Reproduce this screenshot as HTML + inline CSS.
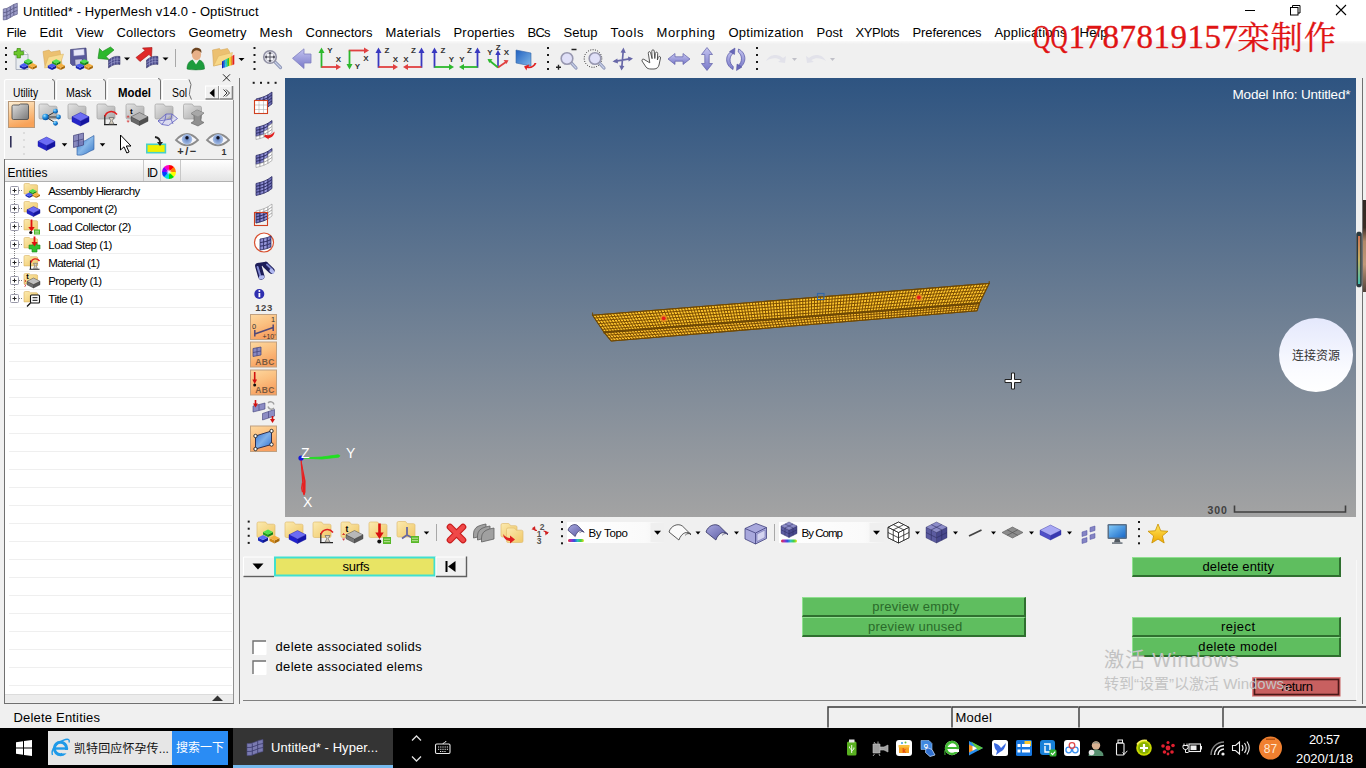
<!DOCTYPE html>
<html><head><meta charset="utf-8"><title>Untitled* - HyperMesh v14.0 - OptiStruct</title>
<style>
*{box-sizing:border-box;margin:0;padding:0}
html,body{width:1366px;height:768px;overflow:hidden;background:#f0f0f0;font-family:"Liberation Sans","Noto Sans CJK SC",sans-serif;font-size:12px;color:#000}
.a{position:absolute}
#title{left:0;top:0;width:1366px;height:22px;background:#fff}
#menu{left:0;top:22px;width:1366px;height:19px;background:#fff}
#tb{left:0;top:41px;width:1366px;height:37px;background:linear-gradient(#fafafa 0,#f0f0f0 3px)}
#left{left:0;top:78px;width:237px;height:627px;background:#f0f0f0}
#vp{left:285px;top:78px;width:1071px;height:439px;background:linear-gradient(#2e5481,#a3a3a3)}
#status{left:0;top:705px;width:1366px;height:23px}
#task{left:0;top:728px;width:1366px;height:40px;background:#000}
.gb{position:absolute;background:#5fbe5f;border-top:1px solid #8fe08f;border-left:1px solid #8fe08f;border-right:2px solid #2f6f2f;border-bottom:2px solid #2f6f2f;text-align:center;font-size:14px;line-height:16px;height:20px}
span.a{white-space:nowrap}
</style></head><body>
<div id="title" class="a"></div><span class="a" style="left:23px;top:3.5px;font-size:13px;letter-spacing:0.092px;color:#000;">Untitled* - HyperMesh v14.0 - OptiStruct</span>
<div id="menu" class="a"></div><span class="a" style="left:6.5px;top:24.5px;font-size:13px;letter-spacing:-0.316px;color:#000;">File</span><span class="a" style="left:39.5px;top:24.5px;font-size:13px;letter-spacing:0.200px;color:#000;">Edit</span><span class="a" style="left:75.5px;top:24.5px;font-size:13px;letter-spacing:0.019px;color:#000;">View</span><span class="a" style="left:116.5px;top:24.5px;font-size:13px;letter-spacing:0.134px;color:#000;">Collectors</span><span class="a" style="left:188.5px;top:24.5px;font-size:13px;letter-spacing:0.133px;color:#000;">Geometry</span><span class="a" style="left:259.5px;top:24.5px;font-size:13px;letter-spacing:0.404px;color:#000;">Mesh</span><span class="a" style="left:305.5px;top:24.5px;font-size:13px;letter-spacing:0.058px;color:#000;">Connectors</span><span class="a" style="left:385.5px;top:24.5px;font-size:13px;letter-spacing:0.283px;color:#000;">Materials</span><span class="a" style="left:453.5px;top:24.5px;font-size:13px;letter-spacing:0.194px;color:#000;">Properties</span><span class="a" style="left:527.5px;top:24.5px;font-size:13px;letter-spacing:-0.780px;color:#000;">BCs</span><span class="a" style="left:563.5px;top:24.5px;font-size:13px;letter-spacing:0.007px;color:#000;">Setup</span><span class="a" style="left:610.5px;top:24.5px;font-size:13px;letter-spacing:0.663px;color:#000;">Tools</span><span class="a" style="left:656.5px;top:24.5px;font-size:13px;letter-spacing:0.615px;color:#000;">Morphing</span><span class="a" style="left:728.5px;top:24.5px;font-size:13px;letter-spacing:0.250px;color:#000;">Optimization</span><span class="a" style="left:816.5px;top:24.5px;font-size:13px;letter-spacing:-0.004px;color:#000;">Post</span><span class="a" style="left:855.5px;top:24.5px;font-size:13px;letter-spacing:-0.374px;color:#000;">XYPlots</span><span class="a" style="left:912.5px;top:24.5px;font-size:13px;letter-spacing:-0.109px;color:#000;">Preferences</span><span class="a" style="left:994.5px;top:24.5px;font-size:13px;letter-spacing:0.173px;color:#000;">Applications</span><span class="a" style="left:1079.5px;top:24.5px;font-size:13px;letter-spacing:0.421px;color:#000;">Help</span>
<div id="tb" class="a"></div>
<svg class="a" style="left:0;top:0" width="1366" height="768" viewBox="0 0 1366 768"><defs>
<linearGradient id="parrow" x1="0" y1="0" x2="0" y2="1"><stop offset="0" stop-color="#c4c4f0"/><stop offset="1" stop-color="#7878c8"/></linearGradient>
<linearGradient id="bplane" x1="0" y1="0" x2="1" y2="1"><stop offset="0" stop-color="#2060c0"/><stop offset="1" stop-color="#80b8e8"/></linearGradient>
<linearGradient id="gfold" x1="0" y1="0" x2="1" y2="1"><stop offset="0" stop-color="#e4e4e4"/><stop offset="1" stop-color="#a8a8a8"/></linearGradient>
<linearGradient id="yfold" x1="0" y1="0" x2="1" y2="1"><stop offset="0" stop-color="#fbeab0"/><stop offset="1" stop-color="#f0c868"/></linearGradient>
<linearGradient id="selbtn" x1="0" y1="0" x2="0.3" y2="1"><stop offset="0" stop-color="#fdf0d8"/><stop offset="0.5" stop-color="#fbc890"/><stop offset="1" stop-color="#f8a258"/></linearGradient>
<linearGradient id="dfold" x1="0" y1="0" x2="1" y2="1"><stop offset="0" stop-color="#e0e0e0"/><stop offset="1" stop-color="#787878"/></linearGradient>
<radialGradient id="bsph" cx="0.35" cy="0.3" r="0.7"><stop offset="0" stop-color="#a0e0ff"/><stop offset="0.5" stop-color="#2090e0"/><stop offset="1" stop-color="#0850a0"/></radialGradient>
<linearGradient id="bsurf" x1="0" y1="0" x2="1" y2="1"><stop offset="0" stop-color="#3070c8"/><stop offset="0.5" stop-color="#88b8e8"/><stop offset="1" stop-color="#3878c8"/></linearGradient>
<radialGradient id="iris" cx="0.5" cy="0.5" r="0.5"><stop offset="0" stop-color="#6080c0"/><stop offset="1" stop-color="#a8c0e8"/></radialGradient>
<linearGradient id="hdr" x1="0" y1="0" x2="0" y2="1"><stop offset="0" stop-color="#ffffff"/><stop offset="1" stop-color="#e4e4e4"/></linearGradient>
<radialGradient id="wheelc"><stop offset="0" stop-color="#fff"/><stop offset="1" stop-color="#fff" stop-opacity="0"/></radialGradient>
<linearGradient id="obtn" x1="0" y1="0" x2="0.4" y2="1"><stop offset="0" stop-color="#fdd8a0"/><stop offset="0.5" stop-color="#fbc080"/><stop offset="1" stop-color="#f8a060"/></linearGradient>
<linearGradient id="bquad" x1="0" y1="0" x2="1" y2="1"><stop offset="0" stop-color="#3070d0"/><stop offset="0.5" stop-color="#80b0e8"/><stop offset="1" stop-color="#3070d0"/></linearGradient>
<linearGradient id="vmg" gradientUnits="userSpaceOnUse" x1="254" y1="0" x2="274" y2="0"><stop offset="0" stop-color="#6060ac"/><stop offset="0.55" stop-color="#9c9ce0"/><stop offset="1" stop-color="#505098"/></linearGradient>
<linearGradient id="cbtn" x1="0" y1="0" x2="0" y2="1"><stop offset="0" stop-color="#e4e8fc"/><stop offset="0.7" stop-color="#fafbff"/><stop offset="1" stop-color="#ffffff"/></linearGradient>
<linearGradient id="meter" x1="0" y1="0" x2="0" y2="1"><stop offset="0" stop-color="#d07050"/><stop offset="0.5" stop-color="#c0b060"/><stop offset="1" stop-color="#40c0b0"/></linearGradient>
<linearGradient id="rainbow" x1="0" y1="0" x2="1" y2="0"><stop offset="0" stop-color="#e03030"/><stop offset="0.2" stop-color="#a030c0"/><stop offset="0.4" stop-color="#3050e0"/><stop offset="0.6" stop-color="#30c0c0"/><stop offset="0.8" stop-color="#40d040"/><stop offset="1" stop-color="#e8e020"/></linearGradient>
<linearGradient id="combo" x1="0" y1="0" x2="1" y2="0"><stop offset="0" stop-color="#ffffff"/><stop offset="0.8" stop-color="#fafafa"/><stop offset="1" stop-color="#f0f0f0"/></linearGradient>
<linearGradient id="psurf" x1="0" y1="0" x2="1" y2="1"><stop offset="0" stop-color="#a8a8e0"/><stop offset="1" stop-color="#5858a0"/></linearGradient>
<linearGradient id="mon" x1="0" y1="0" x2="1" y2="1"><stop offset="0" stop-color="#80c8f8"/><stop offset="1" stop-color="#1868c8"/></linearGradient>
<linearGradient id="star" x1="0" y1="0" x2="0" y2="1"><stop offset="0" stop-color="#ffe860"/><stop offset="1" stop-color="#f0a800"/></linearGradient>
<linearGradient id="photo" x1="0" y1="0" x2="0" y2="1"><stop offset="0" stop-color="#302824"/><stop offset="0.3" stop-color="#3a2c24"/><stop offset="0.45" stop-color="#b08868"/><stop offset="0.7" stop-color="#c09878"/><stop offset="1" stop-color="#504038"/></linearGradient>
</defs></svg>
<svg class="a" style="left:0;top:0" width="1366" height="768" viewBox="0 0 1366 768"><rect x="5" y="47" width="2" height="2" fill="#1a1a1a"/><rect x="5" y="54" width="2" height="2" fill="#1a1a1a"/><rect x="5" y="61" width="2" height="2" fill="#1a1a1a"/><rect x="5" y="68" width="2" height="2" fill="#1a1a1a"/><path d="M16 50.5 h8 l4 4 v15 h-12 z" fill="#e8ecf0" stroke="#9098a8" stroke-width="0.7"/><path d="M24 50.5 v4 h4" fill="#fff" stroke="#9098a8" stroke-width="0.6"/><path d="M17 48.5 h3.4 v3 h3 v3.4 h-3 v3 h-3.4 v-3 h-3 v-3.4 h3 z" fill="#6cc82c" stroke="#3c8c10" stroke-width="0.7"/><polygon points="24,60.92 28.25,63.05 28.25,65.3 24,63.17" fill="#1f9a1f"/><polygon points="28.25,63.05 32.5,60.92 32.5,63.17 28.25,65.3" fill="#168016"/><polygon points="24,60.92 28.25,58.8 32.5,60.92 28.25,63.05" fill="#4fe04f"/><polygon points="19.8,65.22 24.05,67.35 24.05,69.6 19.8,67.47" fill="#1a28b8"/><polygon points="24.05,67.35 28.3,65.22 28.3,67.47 24.05,69.6" fill="#101a90"/><polygon points="19.8,65.22 24.05,63.1 28.3,65.22 24.05,67.35" fill="#4a5cf0"/><polygon points="28.4,65.22 32.65,67.35 32.65,69.6 28.4,67.47" fill="#d08818"/><polygon points="32.65,67.35 36.9,65.22 36.9,67.47 32.65,69.6" fill="#a86808"/><polygon points="28.4,65.22 32.65,63.1 36.9,65.22 32.65,67.35" fill="#f4b040"/><path d="M43 51.5 l6 -1.5 l2 2 l9 -1.5 l2 14 l-17 2.5 z" fill="#ecc070" stroke="#d0a050" stroke-width="0.5"/><path d="M44.5 68 l4 -11 l15 -3 l-3.5 11.5 z" fill="#f8dc90" stroke="#d8b060" stroke-width="0.5"/><polygon points="52,61.33 56.25,63.45 56.25,65.7 52,63.58" fill="#1f9a1f"/><polygon points="56.25,63.45 60.5,61.33 60.5,63.58 56.25,65.7" fill="#168016"/><polygon points="52,61.33 56.25,59.2 60.5,61.33 56.25,63.45" fill="#4fe04f"/><polygon points="47.8,65.62 52.05,67.75 52.05,70 47.8,67.88" fill="#1a28b8"/><polygon points="52.05,67.75 56.3,65.62 56.3,67.88 52.05,70" fill="#101a90"/><polygon points="47.8,65.62 52.05,63.5 56.3,65.62 52.05,67.75" fill="#4a5cf0"/><polygon points="56.4,65.62 60.65,67.75 60.65,70 56.4,67.88" fill="#d08818"/><polygon points="60.65,67.75 64.9,65.62 64.9,67.88 60.65,70" fill="#a86808"/><polygon points="56.4,65.62 60.65,63.5 64.9,65.62 60.65,67.75" fill="#f4b040"/><path d="M70.5 49.5 l15.5 -1.5 l1 16 l-14.5 1.5 l-2 -2 z" fill="#5a5a9c" stroke="#38386c" stroke-width="0.6"/><path d="M73.5 50 l10.5 -1 l0.4 6 l-10.6 1 z" fill="#e8e8f8" stroke="#8888b8" stroke-width="0.4"/><path d="M75 59.5 l7 -0.6 l0.3 5.5 l-7 0.7 z" fill="#c8c8e0" stroke="#38386c" stroke-width="0.3"/><polygon points="80,61.33 84.25,63.45 84.25,65.7 80,63.58" fill="#1f9a1f"/><polygon points="84.25,63.45 88.5,61.33 88.5,63.58 84.25,65.7" fill="#168016"/><polygon points="80,61.33 84.25,59.2 88.5,61.33 84.25,63.45" fill="#4fe04f"/><polygon points="75.8,65.62 80.05,67.75 80.05,70 75.8,67.88" fill="#1a28b8"/><polygon points="80.05,67.75 84.3,65.62 84.3,67.88 80.05,70" fill="#101a90"/><polygon points="75.8,65.62 80.05,63.5 84.3,65.62 80.05,67.75" fill="#4a5cf0"/><polygon points="84.4,65.62 88.65,67.75 88.65,70 84.4,67.88" fill="#d08818"/><polygon points="88.65,67.75 92.9,65.62 92.9,67.88 88.65,70" fill="#a86808"/><polygon points="84.4,65.62 88.65,63.5 92.9,65.62 88.65,67.75" fill="#f4b040"/><path d="M110.5 47 l3.5 3 l-8 6.5 l3 3 l-11 -1 l1.5 -10 l3 3 z" fill="#2cb82c" stroke="#188018" stroke-width="0.6"/><polygon points="108.5,60 109.94,58.99 111.38,58.06 112.81,57.3 114.25,56.75 115.69,56.43 117.12,56.31 118.56,56.36 120,56.5 120,64.5 118.56,64.36 117.12,64.31 115.69,64.43 114.25,64.75 112.81,65.3 111.38,66.06 109.94,66.99 108.5,68" fill="#4c4c8c" stroke="#2c2c5c" stroke-width="0.5"/><polyline points="108.5,62.67 109.94,61.66 111.38,60.73 112.81,59.97 114.25,59.42 115.69,59.09 117.12,58.98 118.56,59.03 120,59.17" fill="none" stroke="#a8a8d8" stroke-width="0.6"/><polyline points="108.5,65.33 109.94,64.32 111.38,63.4 112.81,62.64 114.25,62.08 115.69,61.76 117.12,61.65 118.56,61.7 120,61.83" fill="none" stroke="#a8a8d8" stroke-width="0.6"/><line x1="111.38" y1="58.06" x2="111.38" y2="66.06" stroke="#a8a8d8" stroke-width="0.6"/><line x1="114.25" y1="56.75" x2="114.25" y2="64.75" stroke="#a8a8d8" stroke-width="0.6"/><line x1="117.12" y1="56.31" x2="117.12" y2="64.31" stroke="#a8a8d8" stroke-width="0.6"/><polygon points="124,57.4 130,57.4 127,60.6" fill="#000"/><path d="M136 57.5 l9 -7 l-2.5 -2.5 l9.5 -0.5 l-0.5 9.5 l-2.5 -2.5 l-9 7 z" fill="#e02828" stroke="#a01010" stroke-width="0.6"/><polygon points="146.5,60 147.94,58.99 149.38,58.06 150.81,57.3 152.25,56.75 153.69,56.43 155.12,56.31 156.56,56.36 158,56.5 158,64.5 156.56,64.36 155.12,64.31 153.69,64.43 152.25,64.75 150.81,65.3 149.38,66.06 147.94,66.99 146.5,68" fill="#4c4c8c" stroke="#2c2c5c" stroke-width="0.5"/><polyline points="146.5,62.67 147.94,61.66 149.38,60.73 150.81,59.97 152.25,59.42 153.69,59.09 155.12,58.98 156.56,59.03 158,59.17" fill="none" stroke="#a8a8d8" stroke-width="0.6"/><polyline points="146.5,65.33 147.94,64.32 149.38,63.4 150.81,62.64 152.25,62.08 153.69,61.76 155.12,61.65 156.56,61.7 158,61.83" fill="none" stroke="#a8a8d8" stroke-width="0.6"/><line x1="149.38" y1="58.06" x2="149.38" y2="66.06" stroke="#a8a8d8" stroke-width="0.6"/><line x1="152.25" y1="56.75" x2="152.25" y2="64.75" stroke="#a8a8d8" stroke-width="0.6"/><line x1="155.12" y1="56.31" x2="155.12" y2="64.31" stroke="#a8a8d8" stroke-width="0.6"/><polygon points="162.5,57.4 168.5,57.4 165.5,60.6" fill="#000"/><line x1="175.5" y1="49" x2="175.5" y2="67" stroke="#a8a8a8" stroke-width="1"/><path d="M187 69 c0 -6 3 -8.5 6 -9 l3 3 l3 -3 c3 0.5 5.5 3 5.5 9 c-4 1.2 -13 1.2 -17.5 0 z" fill="#1c9c3c" stroke="#107028" stroke-width="0.5"/><path d="M193 60 l3 4.5 l3 -4.5 l-1 -1.5 h-4 z" fill="#e8f0e8"/><ellipse cx="196.5" cy="54.5" rx="4.6" ry="5.8" fill="#e8b088"/><path d="M191.6 54 c-0.5 -5 3 -7 6.5 -6 c3 0.5 3.8 3 3.2 5 c-1.5 -2.5 -5 -3.5 -7 -2 c-1.3 1 -1.5 2.5 -2.7 3 z" fill="#6c4420"/><path d="M212.5 50 l7 -1.5 l1 1.5 l7 -1.5 l2 3 l0 11 l-16 3.5 z" fill="#ecc070" stroke="#d0a050" stroke-width="0.5"/><path d="M213.5 66 l5 -10 l14 -3.5 l-2 9 z" fill="#f8d888" stroke="#d8b060" stroke-width="0.5"/><polygon points="222,61.5 223.8,60.5 223.8,67.5 222,68.5" fill="#1020c0"/><polygon points="223.75,60.55 225.55,59.55 225.55,66.95 223.75,67.95" fill="#1880e0"/><polygon points="225.5,59.6 227.3,58.6 227.3,66.4 225.5,67.4" fill="#20c8c8"/><polygon points="227.25,58.65 229.05,57.65 229.05,65.85 227.25,66.85" fill="#30c030"/><polygon points="229,57.7 230.8,56.7 230.8,65.3 229,66.3" fill="#e8e020"/><polygon points="230.75,56.75 232.55,55.75 232.55,64.75 230.75,65.75" fill="#f09020"/><polygon points="232.5,55.8 234.3,54.8 234.3,64.2 232.5,65.2" fill="#e02020"/><polygon points="238.5,57.9 244.5,57.9 241.5,61.1" fill="#000"/><rect x="253.5" y="47" width="2" height="2" fill="#1a1a1a"/><rect x="253.5" y="54" width="2" height="2" fill="#1a1a1a"/><rect x="253.5" y="61" width="2" height="2" fill="#1a1a1a"/><rect x="253.5" y="68" width="2" height="2" fill="#1a1a1a"/><line x1="274.41" y1="61.41" x2="280.5" y2="67.5" stroke="#9098b8" stroke-width="3.2" stroke-linecap="round"/><line x1="274.41" y1="61.41" x2="280.5" y2="67.5" stroke="#c8d0e8" stroke-width="1.2" stroke-linecap="round"/><circle cx="270" cy="57" r="6.3" fill="#f4f4f8" stroke="#9090a4" stroke-width="1.6"/><circle cx="270" cy="57" r="4.6" fill="none" stroke="#b0b0c0" stroke-width="0.8"/><path d="M270 52.5 v9 M265.5 57 h9" fill="none" stroke="#50505c" stroke-width="1"/><polygon points="270,51.5 268.3,54 271.7,54" fill="#50505c"/><polygon points="270,62.5 268.3,60 271.7,60" fill="#50505c"/><polygon points="264.5,57 267,55.3 267,58.7" fill="#50505c"/><polygon points="275.5,57 273,55.3 273,58.7" fill="#50505c"/><path d="M292.5 58.3 l11.5 -9.5 v5.2 h7 v9 h-7 v5.5 z" fill="url(#parrow)" stroke="#8080c0" stroke-width="0.8"/><line x1="321.5" y1="67.8" x2="321.5" y2="51" stroke="#2cb82c" stroke-width="1.8"/><polygon points="318.5,53 324.5,53 321.5,47.5" fill="#2cb82c"/><line x1="321.5" y1="67" x2="337" y2="67" stroke="#e04040" stroke-width="1.8"/><polygon points="336,64 336,70 341,67" fill="#e04040"/><text x="330" y="53" font-size="8" fill="#333" text-anchor="middle" font-weight="bold" font-family="Liberation Sans,sans-serif">Y</text><text x="338.5" y="62" font-size="8" fill="#333" text-anchor="middle" font-weight="bold" font-family="Liberation Sans,sans-serif">X</text><line x1="348.7" y1="50.5" x2="365" y2="50.5" stroke="#e04040" stroke-width="1.8"/><polygon points="364,47.5 364,53.5 369,50.5" fill="#e04040"/><line x1="349.5" y1="50.5" x2="349.5" y2="65" stroke="#2cb82c" stroke-width="1.8"/><polygon points="346.5,64 352.5,64 349.5,69.5" fill="#2cb82c"/><text x="366" y="61" font-size="8" fill="#333" text-anchor="middle" font-weight="bold" font-family="Liberation Sans,sans-serif">X</text><text x="357.5" y="69.3" font-size="8" fill="#333" text-anchor="middle" font-weight="bold" font-family="Liberation Sans,sans-serif">Y</text><line x1="378.5" y1="67.8" x2="378.5" y2="51" stroke="#3838c0" stroke-width="1.8"/><polygon points="375.5,53 381.5,53 378.5,47.5" fill="#3838c0"/><line x1="378.5" y1="67" x2="394" y2="67" stroke="#e04040" stroke-width="1.8"/><polygon points="393,64 393,70 398,67" fill="#e04040"/><text x="387" y="53" font-size="8" fill="#333" text-anchor="middle" font-weight="bold" font-family="Liberation Sans,sans-serif">Z</text><text x="395.5" y="62" font-size="8" fill="#333" text-anchor="middle" font-weight="bold" font-family="Liberation Sans,sans-serif">X</text><line x1="421.5" y1="67.8" x2="421.5" y2="51" stroke="#3838c0" stroke-width="1.8"/><polygon points="418.5,53 424.5,53 421.5,47.5" fill="#3838c0"/><line x1="421.5" y1="67" x2="407" y2="67" stroke="#e04040" stroke-width="1.8"/><polygon points="408,64 408,70 403,67" fill="#e04040"/><text x="413.5" y="53" font-size="8" fill="#333" text-anchor="middle" font-weight="bold" font-family="Liberation Sans,sans-serif">Z</text><text x="406" y="62" font-size="8" fill="#333" text-anchor="middle" font-weight="bold" font-family="Liberation Sans,sans-serif">X</text><line x1="434.5" y1="67.8" x2="434.5" y2="51" stroke="#3838c0" stroke-width="1.8"/><polygon points="431.5,53 437.5,53 434.5,47.5" fill="#3838c0"/><line x1="434.5" y1="67" x2="450" y2="67" stroke="#2cb82c" stroke-width="1.8"/><polygon points="449,64 449,70 454,67" fill="#2cb82c"/><text x="443" y="53" font-size="8" fill="#333" text-anchor="middle" font-weight="bold" font-family="Liberation Sans,sans-serif">Z</text><text x="451.5" y="62" font-size="8" fill="#333" text-anchor="middle" font-weight="bold" font-family="Liberation Sans,sans-serif">Y</text><line x1="477.5" y1="67.8" x2="477.5" y2="51" stroke="#3838c0" stroke-width="1.8"/><polygon points="474.5,53 480.5,53 477.5,47.5" fill="#3838c0"/><line x1="477.5" y1="67" x2="463" y2="67" stroke="#2cb82c" stroke-width="1.8"/><polygon points="464,64 464,70 459,67" fill="#2cb82c"/><text x="469.5" y="53" font-size="8" fill="#333" text-anchor="middle" font-weight="bold" font-family="Liberation Sans,sans-serif">Z</text><text x="462" y="62" font-size="8" fill="#333" text-anchor="middle" font-weight="bold" font-family="Liberation Sans,sans-serif">Y</text><line x1="498" y1="67.5" x2="498" y2="53" stroke="#3838c0" stroke-width="1.6"/><polygon points="495.3,55 500.7,55 498,50" fill="#3838c0"/><line x1="498" y1="67.5" x2="490" y2="61" stroke="#2cb82c" stroke-width="1.8"/><polygon points="487.5,59 492.5,59.2 489.3,63" fill="#2cb82c"/><line x1="498" y1="67.5" x2="506" y2="62" stroke="#e04040" stroke-width="1.8"/><polygon points="508.5,60.2 503.6,60 506.5,64" fill="#e04040"/><text x="490" y="54.5" font-size="8" fill="#333" text-anchor="middle" font-weight="bold" font-family="Liberation Sans,sans-serif">Y</text><text x="498.2" y="50" font-size="8" fill="#333" text-anchor="middle" font-weight="bold" font-family="Liberation Sans,sans-serif">Z</text><text x="506.5" y="54.5" font-size="8" fill="#333" text-anchor="middle" font-weight="bold" font-family="Liberation Sans,sans-serif">X</text><path d="M516 50 l15 3 l0 13 l-15 -3 z" fill="url(#bplane)" stroke="#3868a8" stroke-width="0.6"/><path d="M527 68 c4 1 8 -1 9.5 -5 l-2 0 c-1 3 -4 4 -6 3.2 l1 -2 l-5.5 2.3 l2.5 4 z" fill="#e02020"/><rect x="547" y="47" width="2" height="2" fill="#1a1a1a"/><rect x="547" y="54" width="2" height="2" fill="#1a1a1a"/><rect x="547" y="61" width="2" height="2" fill="#1a1a1a"/><rect x="547" y="68" width="2" height="2" fill="#1a1a1a"/><line x1="571.06" y1="62.56" x2="576" y2="68" stroke="#9098b8" stroke-width="3.2" stroke-linecap="round"/><line x1="571.06" y1="62.56" x2="576" y2="68" stroke="#c8d0e8" stroke-width="1.2" stroke-linecap="round"/><circle cx="567" cy="58.5" r="5.8" fill="#e0e0f8" stroke="#9898b0" stroke-width="1.6"/><path d="M571.5 49.5 h5" fill="none" stroke="#222" stroke-width="1.5"/><path d="M556 67.3 h5 M558.5 64.8 v5" fill="none" stroke="#222" stroke-width="1.4"/><circle cx="593" cy="58.5" r="8.8" fill="none" stroke="#222" stroke-width="1" stroke-dasharray="1 1.4"/><line x1="599.06" y1="62.56" x2="604" y2="68" stroke="#9098b8" stroke-width="3.2" stroke-linecap="round"/><line x1="599.06" y1="62.56" x2="604" y2="68" stroke="#c8d0e8" stroke-width="1.2" stroke-linecap="round"/><circle cx="595" cy="58.5" r="5.8" fill="#e0e0f8" stroke="#9898b0" stroke-width="1.6"/><path d="M623.3 50 L621.7 68.5 M614.5 61.3 L631 58.7" fill="none" stroke="#6868a8" stroke-width="1.7"/><polygon points="623.5,47.5 620.6,52.5 625.8,52.9" fill="#6868a8"/><polygon points="621.5,70.5 619.2,65.5 624.4,65.9" fill="#6868a8"/><polygon points="612.5,61.6 617.4,58.4 618,63.5" fill="#6868a8"/><polygon points="633,58.4 628,56.5 628.6,61.6" fill="#6868a8"/><path d="M645 60 c-1.5 -1.5 -3.5 -1 -3 1 l4 6 c1 1.5 3 2 5 2 h3 c3 0 4.5 -2 5 -4 l1.5 -7 c0.3 -1.8 -1.8 -2.2 -2.3 -0.5 l-0.8 2.5 l0.3 -6.5 c0 -1.8 -2.2 -1.8 -2.4 0 l-0.5 5 l-0.6 -7.5 c-0.2 -1.8 -2.4 -1.6 -2.4 0.2 l0.3 7.5 l-1.5 -6 c-0.5 -1.7 -2.6 -1.2 -2.3 0.6 l1.5 9.5 z" fill="#fff" stroke="#444" stroke-width="0.9"/><path d="M668 59 l7 -5.5 v3.3 h8 v-3.3 l7 5.5 l-7 5.5 v-3.3 h-8 v3.3 z" fill="url(#parrow)" stroke="#6060a8" stroke-width="0.7"/><path d="M707 47.5 l5.5 7 h-3.3 v9 h3.3 l-5.5 7 l-5.5 -7 h3.3 v-9 h-3.3 z" fill="url(#parrow)" stroke="#6060a8" stroke-width="0.7"/><path d="M733 50.5 C724.5 54 724.5 65 733 69.5 L733.3 66.5 C729 63.5 729 56 733.3 53.2 Z" fill="url(#parrow)" stroke="#5050a0" stroke-width="0.7"/><path d="M738.5 49 C747 53 747 64 738.5 68.5 L738.2 65.5 C742.5 62.5 742.5 55 738.2 52 Z" fill="url(#parrow)" stroke="#5050a0" stroke-width="0.7"/><polygon points="729.5,51.5 735,48 734.5,54.5" fill="#6868b8" stroke="#5050a0" stroke-width="0.5"/><polygon points="742,67 736.5,70.5 737,64" fill="#6868b8" stroke="#5050a0" stroke-width="0.5"/><rect x="756" y="47" width="2" height="2" fill="#1a1a1a"/><rect x="756" y="54" width="2" height="2" fill="#1a1a1a"/><rect x="756" y="61" width="2" height="2" fill="#1a1a1a"/><rect x="756" y="68" width="2" height="2" fill="#1a1a1a"/><path d="M766 61 c3 -7 12 -8 17 -3 l3 -2 l-1 7 l-7 -1 l2.5 -1.8 c-4 -3 -10 -2 -14.5 0.8 z" fill="#e2e2ea"/><polygon points="792,58 797,58 794.5,61" fill="#c0c0c8"/><path d="M826 61 c-3 -7 -12 -8 -17 -3 l-3 -2 l1 7 l7 -1 l-2.5 -1.8 c4 -3 10 -2 14.5 0.8 z" fill="#e2e2ea"/><polygon points="830,58 835,58 832.5,61" fill="#c0c0c8"/></svg>
<div id="left" class="a"></div>
<svg class="a" style="left:0;top:0" width="1366" height="768" viewBox="0 0 1366 768"><path d="M4.5 100 V81.5 q0 -2 2 -2 H52" fill="none" stroke="#ffffff" stroke-width="1.2"/><path d="M56.5 100 V81.5 q0 -2 2 -2 H103" fill="none" stroke="#ffffff" stroke-width="1.2"/><path d="M107.5 100 V80.5 q0 -2 2 -2 H158" fill="none" stroke="#ffffff" stroke-width="1.2"/><path d="M162.5 100 V81.5 q0 -2 2 -2 H187.5" fill="none" stroke="#ffffff" stroke-width="1.2"/><path d="M52 79.5 q2.5 0 2.5 2.5 V99.5" fill="none" stroke="#707070" stroke-width="1"/><path d="M103 79.5 q2.5 0 2.5 2.5 V99.5" fill="none" stroke="#707070" stroke-width="1"/><path d="M158 78.5 q2.5 0 2.5 2.5 V99.5" fill="none" stroke="#707070" stroke-width="1"/><path d="M189 79.5 q3.5 5 1 10 q-2 5 1.5 10" fill="none" stroke="#707070" stroke-width="1"/><line x1="4.5" y1="100.5" x2="107" y2="100.5" stroke="#ffffff" stroke-width="1"/><line x1="161" y1="100.5" x2="234" y2="100.5" stroke="#ffffff" stroke-width="1"/><line x1="4.5" y1="100" x2="4.5" y2="160" stroke="#fff" stroke-width="1"/><line x1="233.5" y1="100" x2="233.5" y2="704" stroke="#909090" stroke-width="1"/><rect x="205.5" y="86" width="13.5" height="13" fill="#f0f0f0" stroke="#fff" stroke-width="1"/><path d="M205.5 99 h13.5 v-13" fill="none" stroke="#808080" stroke-width="1.6"/><rect x="219.5" y="86" width="13" height="13" fill="#f0f0f0" stroke="#fff" stroke-width="1"/><path d="M219.5 99 h13 v-13" fill="none" stroke="#808080" stroke-width="1.6"/><polygon points="209.5,93 214.5,88.5 214.5,97.5" fill="#000"/><path d="M223.5 89.5 l3.5 3.5 l-3.5 3.5 M226 89.5 l3.5 3.5 l-3.5 3.5" fill="none" stroke="#333" stroke-width="1"/><path d="M223 74.3 l7 7 M230 74.3 l-7 7" fill="none" stroke="#111" stroke-width="0.9"/><rect x="8.5" y="101.5" width="26" height="26" fill="url(#selbtn)" stroke="#b89878" stroke-width="1"/><path d="M12 106.5 q0 -1.5 1.5 -1.5 h5.5 l1.5 -1 h6.5 q1.5 0 1.5 1.5 v12.5 q0 1.5 -1.5 1.5 h-13.5 q-1.5 0 -1.5 -1.5 z" fill="url(#dfold)" stroke="#505050" stroke-width="0.9"/><path d="M39 105.5 q0 -1.5 1.5 -1.5 h6.48 q1 0 1.5 1 l0.8 1.2 h6.22 q1.5 0 1.5 1.5 v9.8 q0 1.5 -1.5 1.5 h-15 q-1.5 0 -1.5 -1.5 z" fill="url(#gfold)" stroke="#a0a0a0" stroke-width="0.7"/><path d="M68 105.5 q0 -1.5 1.5 -1.5 h6.48 q1 0 1.5 1 l0.8 1.2 h6.22 q1.5 0 1.5 1.5 v9.8 q0 1.5 -1.5 1.5 h-15 q-1.5 0 -1.5 -1.5 z" fill="url(#gfold)" stroke="#a0a0a0" stroke-width="0.7"/><path d="M97 105.5 q0 -1.5 1.5 -1.5 h6.48 q1 0 1.5 1 l0.8 1.2 h6.22 q1.5 0 1.5 1.5 v9.8 q0 1.5 -1.5 1.5 h-15 q-1.5 0 -1.5 -1.5 z" fill="url(#gfold)" stroke="#a0a0a0" stroke-width="0.7"/><path d="M126 105.5 q0 -1.5 1.5 -1.5 h6.48 q1 0 1.5 1 l0.8 1.2 h6.22 q1.5 0 1.5 1.5 v9.8 q0 1.5 -1.5 1.5 h-15 q-1.5 0 -1.5 -1.5 z" fill="url(#gfold)" stroke="#a0a0a0" stroke-width="0.7"/><path d="M155 105.5 q0 -1.5 1.5 -1.5 h6.48 q1 0 1.5 1 l0.8 1.2 h6.22 q1.5 0 1.5 1.5 v9.8 q0 1.5 -1.5 1.5 h-15 q-1.5 0 -1.5 -1.5 z" fill="url(#gfold)" stroke="#a0a0a0" stroke-width="0.7"/><path d="M183.5 105.5 q0 -1.5 1.5 -1.5 h6.48 q1 0 1.5 1 l0.8 1.2 h6.22 q1.5 0 1.5 1.5 v9.8 q0 1.5 -1.5 1.5 h-15 q-1.5 0 -1.5 -1.5 z" fill="url(#gfold)" stroke="#a0a0a0" stroke-width="0.7"/><path d="M46 117 L55.5 111.5 M46 117 H58 M46 117 L55.5 123" fill="none" stroke="#333" stroke-width="1"/><circle cx="45.5" cy="117" r="3.2" fill="url(#bsph)"/><circle cx="55.5" cy="111.2" r="2.4" fill="url(#bsph)"/><circle cx="58.5" cy="117" r="2.4" fill="url(#bsph)"/><circle cx="55.5" cy="123.3" r="2.4" fill="url(#bsph)"/><polygon points="72,116.75 80.5,121 80.5,126 72,121.75" fill="#2424c8" stroke="#1010a0" stroke-width="0.4"/><polygon points="80.5,121 89,116.75 89,121.75 80.5,126" fill="#1414a0" stroke="#1010a0" stroke-width="0.4"/><polygon points="72,116.75 80.5,112.5 89,116.75 80.5,121" fill="#6c6cf4" stroke="#1010a0" stroke-width="0.4"/><path d="M104.8 125 v-10 M104 124.6 h13" fill="none" stroke="#222" stroke-width="1.2"/><path d="M105 116.5 c1 -5 8 -7 12 -2" fill="none" stroke="#e02020" stroke-width="1.5"/><path d="M109 117.5 h5 l-1.8 3.3 l1.8 3.3 h-5 l1.8 -3.3 z" fill="#d8d0c0" stroke="#666" stroke-width="0.7"/><polygon points="131,116.75 139.5,121 139.5,125.5 131,121.25" fill="#686868" stroke="#303030" stroke-width="0.4"/><polygon points="139.5,121 148,116.75 148,121.25 139.5,125.5" fill="#505050" stroke="#303030" stroke-width="0.4"/><polygon points="131,116.75 139.5,112.5 148,116.75 139.5,121" fill="#b0b0b0" stroke="#303030" stroke-width="0.4"/><text x="131.3" y="113.5" font-size="8" fill="#000" text-anchor="middle" font-weight="bold" font-family="Liberation Sans,sans-serif">t</text><path d="M126.8 117 h2.6 M128.1 115.5 v1.5 M126.8 121 h2.6 M128.1 121 v1.5" fill="none" stroke="#d02020" stroke-width="0.8"/><path d="M158 121 l8 -7 h6 l5.5 4.5 l-9 7 l-6.5 -1 z M166 114 l-1 6 l-3 4.5 M165 120 l6 -1 l1 -5 M171 119 l2 5 M158 121 l7 -1" fill="rgba(200,200,240,0.5)" stroke="#6060c0" stroke-width="0.8"/><path d="M191 113.5 l6 -3.5 l7 3 l-3 2.5 v5.5 l3 1.5 l-6 3.5 l-7 -3 l3 -2 v-5.5 z" fill="#909090" stroke="#606060" stroke-width="0.6"/><path d="M197 110 l7 3 l-6 3.5 l-7 -3 z" fill="#a8a8a8"/><line x1="10.8" y1="136" x2="10.8" y2="147.5" stroke="#303058" stroke-width="1.6"/><rect x="23" y="132" width="2" height="2" fill="#dcdcdc"/><rect x="23" y="139" width="2" height="2" fill="#dcdcdc"/><rect x="23" y="146" width="2" height="2" fill="#dcdcdc"/><rect x="23" y="153" width="2" height="2" fill="#dcdcdc"/><polygon points="38,141.25 46.5,145.5 46.5,150.5 38,146.25" fill="#2424c8" stroke="#1010a0" stroke-width="0.4"/><polygon points="46.5,145.5 55,141.25 55,146.25 46.5,150.5" fill="#1414a0" stroke="#1010a0" stroke-width="0.4"/><polygon points="38,141.25 46.5,137 55,141.25 46.5,145.5" fill="#6c6cf4" stroke="#1010a0" stroke-width="0.4"/><polygon points="61.75,143.2 67.25,143.2 64.5,146.4" fill="#000"/><path d="M77 141 q4 2 8.5 -0.5 q4 -2.5 8.5 -5 v14 q-4 1.5 -8 4 q-4.5 2.5 -9 1.5 z" fill="url(#bsurf)" stroke="#2858a0" stroke-width="0.6"/><path d="M73.5 135.5 l10 -2.5 v12 l-10 2.5 z" fill="rgba(120,120,180,0.85)" stroke="#404078" stroke-width="0.7"/><path d="M78.5 134.2 v12 M73.5 141.5 l10 -2.5" fill="none" stroke="#404078" stroke-width="0.7"/><polygon points="99.75,143.2 105.25,143.2 102.5,146.4" fill="#000"/><path d="M120.5 135 v15 l3.5 -3.2 l2.8 6.2 l2.3 -1 l-2.8 -6 h4.7 z" fill="#fff" stroke="#000" stroke-width="1"/><rect x="146.8" y="144.3" width="18.6" height="8.4" fill="#f0f000" stroke="#48d0c8" stroke-width="1.6"/><path d="M155 137 c3 0.5 5 2.5 5 5.5" fill="none" stroke="#222" stroke-width="1.8"/><polygon points="157,142 163,142 160,146" fill="#222"/><path d="M176 140 q11 -12 22 0 q-11 10.5 -22 0 z" fill="#f4f4f8" stroke="#8c8c8c" stroke-width="1.8"/><circle cx="187" cy="139.2" r="5.2" fill="url(#iris)"/><circle cx="187" cy="137.8" r="1.7" fill="#101020"/><path d="M207 140 q11 -12 22 0 q-11 10.5 -22 0 z" fill="#f4f4f8" stroke="#8c8c8c" stroke-width="1.8"/><circle cx="218" cy="139.2" r="5.2" fill="url(#iris)"/><circle cx="218" cy="137.8" r="1.7" fill="#101020"/><text x="187.5" y="155" font-size="11" fill="#333" text-anchor="middle" font-weight="bold" font-family="Liberation Sans,sans-serif" letter-spacing="1.6">+/−</text><text x="224" y="154.5" font-size="9" fill="#333" text-anchor="middle" font-weight="bold" font-family="Liberation Sans,sans-serif">1</text><rect x="5" y="159.5" width="228" height="22" fill="url(#hdr)"/><line x1="5" y1="159.5" x2="233" y2="159.5" stroke="#a8a8a8" stroke-width="1"/><line x1="5" y1="181.5" x2="233" y2="181.5" stroke="#b0b0b0" stroke-width="1"/><line x1="143.5" y1="160" x2="143.5" y2="181" stroke="#c8c8c8" stroke-width="1"/><line x1="160.5" y1="160" x2="160.5" y2="181" stroke="#c8c8c8" stroke-width="1"/><line x1="180.5" y1="160" x2="180.5" y2="181" stroke="#c8c8c8" stroke-width="1"/><line x1="4.5" y1="159" x2="4.5" y2="704" stroke="#707070" stroke-width="1"/><rect x="5" y="182" width="228" height="512" fill="#fff"/><rect x="5" y="694" width="228" height="8" fill="#ececec"/><line x1="5" y1="694.5" x2="233" y2="694.5" stroke="#dcdcdc" stroke-width="1"/><line x1="4" y1="703.5" x2="234" y2="703.5" stroke="#707070" stroke-width="1"/><polygon points="212,701 223,701 217.5,695.5" fill="#333"/><line x1="9" y1="199.5" x2="232" y2="199.5" stroke="#efefef" stroke-width="1"/><line x1="9" y1="217.5" x2="232" y2="217.5" stroke="#efefef" stroke-width="1"/><line x1="9" y1="235.5" x2="232" y2="235.5" stroke="#efefef" stroke-width="1"/><line x1="9" y1="253.5" x2="232" y2="253.5" stroke="#efefef" stroke-width="1"/><line x1="9" y1="271.5" x2="232" y2="271.5" stroke="#efefef" stroke-width="1"/><line x1="9" y1="289.5" x2="232" y2="289.5" stroke="#efefef" stroke-width="1"/><line x1="9" y1="307.5" x2="232" y2="307.5" stroke="#efefef" stroke-width="1"/><line x1="9" y1="325.5" x2="232" y2="325.5" stroke="#efefef" stroke-width="1"/><line x1="9" y1="343.5" x2="232" y2="343.5" stroke="#efefef" stroke-width="1"/><line x1="9" y1="361.5" x2="232" y2="361.5" stroke="#efefef" stroke-width="1"/><line x1="9" y1="379.5" x2="232" y2="379.5" stroke="#efefef" stroke-width="1"/><line x1="9" y1="397.5" x2="232" y2="397.5" stroke="#efefef" stroke-width="1"/><line x1="9" y1="415.5" x2="232" y2="415.5" stroke="#efefef" stroke-width="1"/><line x1="9" y1="433.5" x2="232" y2="433.5" stroke="#efefef" stroke-width="1"/><line x1="9" y1="451.5" x2="232" y2="451.5" stroke="#efefef" stroke-width="1"/><line x1="9" y1="469.5" x2="232" y2="469.5" stroke="#efefef" stroke-width="1"/><line x1="9" y1="487.5" x2="232" y2="487.5" stroke="#efefef" stroke-width="1"/><line x1="9" y1="505.5" x2="232" y2="505.5" stroke="#efefef" stroke-width="1"/><line x1="9" y1="523.5" x2="232" y2="523.5" stroke="#efefef" stroke-width="1"/><line x1="9" y1="541.5" x2="232" y2="541.5" stroke="#efefef" stroke-width="1"/><line x1="9" y1="559.5" x2="232" y2="559.5" stroke="#efefef" stroke-width="1"/><line x1="9" y1="577.5" x2="232" y2="577.5" stroke="#efefef" stroke-width="1"/><line x1="9" y1="595.5" x2="232" y2="595.5" stroke="#efefef" stroke-width="1"/><line x1="9" y1="613.5" x2="232" y2="613.5" stroke="#efefef" stroke-width="1"/><line x1="9" y1="631.5" x2="232" y2="631.5" stroke="#efefef" stroke-width="1"/><line x1="9" y1="649.5" x2="232" y2="649.5" stroke="#efefef" stroke-width="1"/><line x1="9" y1="667.5" x2="232" y2="667.5" stroke="#efefef" stroke-width="1"/><line x1="9" y1="685.5" x2="232" y2="685.5" stroke="#efefef" stroke-width="1"/><path d="M169 172 L169 165 A7 7 0 0 1 174.19 167.3 Z" fill="#ff0000"/><path d="M169 172 L173.95 167.05 A7 7 0 0 1 175.99 172.35 Z" fill="#ff8000"/><path d="M169 172 L176 172 A7 7 0 0 1 173.7 177.19 Z" fill="#ffff00"/><path d="M169 172 L173.95 176.95 A7 7 0 0 1 168.65 178.99 Z" fill="#00e000"/><path d="M169 172 L169 179 A7 7 0 0 1 163.81 176.7 Z" fill="#00e0e0"/><path d="M169 172 L164.05 176.95 A7 7 0 0 1 162.01 171.65 Z" fill="#0040ff"/><path d="M169 172 L162 172 A7 7 0 0 1 164.3 166.81 Z" fill="#8000ff"/><path d="M169 172 L164.05 167.05 A7 7 0 0 1 169.35 165.01 Z" fill="#ff00c0"/><circle cx="169" cy="172" r="3" fill="url(#wheelc)"/><line x1="14.5" y1="195" x2="14.5" y2="294" stroke="#808080" stroke-width="1" stroke-dasharray="1 1"/><line x1="19" y1="190.5" x2="23" y2="190.5" stroke="#808080" stroke-width="1" stroke-dasharray="1 1"/><rect x="10.5" y="186.5" width="8" height="8" fill="#fff" rx="1" stroke="#9898a8" stroke-width="1"/><path d="M12.5 190.5 h4 M14.5 188.5 v4" fill="none" stroke="#222" stroke-width="1"/><path d="M24 184.7 q0 -1.2 1.2 -1.2 h4 l1.2 1.2 h6 q1.2 0 1.2 1.2 v8 h-13.6 z" fill="url(#yfold)" stroke="#d8b060" stroke-width="0.6"/><line x1="19" y1="208.5" x2="23" y2="208.5" stroke="#808080" stroke-width="1" stroke-dasharray="1 1"/><rect x="10.5" y="204.5" width="8" height="8" fill="#fff" rx="1" stroke="#9898a8" stroke-width="1"/><path d="M12.5 208.5 h4 M14.5 206.5 v4" fill="none" stroke="#222" stroke-width="1"/><path d="M24 202.7 q0 -1.2 1.2 -1.2 h4 l1.2 1.2 h6 q1.2 0 1.2 1.2 v8 h-13.6 z" fill="url(#yfold)" stroke="#d8b060" stroke-width="0.6"/><line x1="19" y1="226.5" x2="23" y2="226.5" stroke="#808080" stroke-width="1" stroke-dasharray="1 1"/><rect x="10.5" y="222.5" width="8" height="8" fill="#fff" rx="1" stroke="#9898a8" stroke-width="1"/><path d="M12.5 226.5 h4 M14.5 224.5 v4" fill="none" stroke="#222" stroke-width="1"/><path d="M24 220.7 q0 -1.2 1.2 -1.2 h4 l1.2 1.2 h6 q1.2 0 1.2 1.2 v8 h-13.6 z" fill="url(#yfold)" stroke="#d8b060" stroke-width="0.6"/><line x1="19" y1="244.5" x2="23" y2="244.5" stroke="#808080" stroke-width="1" stroke-dasharray="1 1"/><rect x="10.5" y="240.5" width="8" height="8" fill="#fff" rx="1" stroke="#9898a8" stroke-width="1"/><path d="M12.5 244.5 h4 M14.5 242.5 v4" fill="none" stroke="#222" stroke-width="1"/><path d="M24 238.7 q0 -1.2 1.2 -1.2 h4 l1.2 1.2 h6 q1.2 0 1.2 1.2 v8 h-13.6 z" fill="url(#yfold)" stroke="#d8b060" stroke-width="0.6"/><line x1="19" y1="262.5" x2="23" y2="262.5" stroke="#808080" stroke-width="1" stroke-dasharray="1 1"/><rect x="10.5" y="258.5" width="8" height="8" fill="#fff" rx="1" stroke="#9898a8" stroke-width="1"/><path d="M12.5 262.5 h4 M14.5 260.5 v4" fill="none" stroke="#222" stroke-width="1"/><path d="M24 256.7 q0 -1.2 1.2 -1.2 h4 l1.2 1.2 h6 q1.2 0 1.2 1.2 v8 h-13.6 z" fill="url(#yfold)" stroke="#d8b060" stroke-width="0.6"/><line x1="19" y1="280.5" x2="23" y2="280.5" stroke="#808080" stroke-width="1" stroke-dasharray="1 1"/><rect x="10.5" y="276.5" width="8" height="8" fill="#fff" rx="1" stroke="#9898a8" stroke-width="1"/><path d="M12.5 280.5 h4 M14.5 278.5 v4" fill="none" stroke="#222" stroke-width="1"/><path d="M24 274.7 q0 -1.2 1.2 -1.2 h4 l1.2 1.2 h6 q1.2 0 1.2 1.2 v8 h-13.6 z" fill="url(#yfold)" stroke="#d8b060" stroke-width="0.6"/><line x1="19" y1="298.5" x2="23" y2="298.5" stroke="#808080" stroke-width="1" stroke-dasharray="1 1"/><rect x="10.5" y="294.5" width="8" height="8" fill="#fff" rx="1" stroke="#9898a8" stroke-width="1"/><path d="M12.5 298.5 h4 M14.5 296.5 v4" fill="none" stroke="#222" stroke-width="1"/><path d="M24 292.7 q0 -1.2 1.2 -1.2 h4 l1.2 1.2 h6 q1.2 0 1.2 1.2 v8 h-13.6 z" fill="url(#yfold)" stroke="#d8b060" stroke-width="0.6"/><polygon points="29,190.88 32.75,192.75 32.75,194.5 29,192.62" fill="#1f9a1f"/><polygon points="32.75,192.75 36.5,190.88 36.5,192.62 32.75,194.5" fill="#168016"/><polygon points="29,190.88 32.75,189 36.5,190.88 32.75,192.75" fill="#4fe04f"/><polygon points="25.5,194.38 29.25,196.25 29.25,198 25.5,196.12" fill="#1a28b8"/><polygon points="29.25,196.25 33,194.38 33,196.12 29.25,198" fill="#101a90"/><polygon points="25.5,194.38 29.25,192.5 33,194.38 29.25,196.25" fill="#4a5cf0"/><polygon points="32.5,194.38 36.25,196.25 36.25,198 32.5,196.12" fill="#d08818"/><polygon points="36.25,196.25 40,194.38 40,196.12 36.25,198" fill="#a86808"/><polygon points="32.5,194.38 36.25,192.5 40,194.38 36.25,196.25" fill="#f4b040"/><polygon points="27,209.75 33.5,213 33.5,216.5 27,213.25" fill="#2424c8" stroke="#1010a0" stroke-width="0.4"/><polygon points="33.5,213 40,209.75 40,213.25 33.5,216.5" fill="#1414a0" stroke="#1010a0" stroke-width="0.4"/><polygon points="27,209.75 33.5,206.5 40,209.75 33.5,213" fill="#6c6cf4" stroke="#1010a0" stroke-width="0.4"/><line x1="31.5" y1="219.5" x2="31.5" y2="228.5" stroke="#e01010" stroke-width="1.8"/><polygon points="28.3,227 34.7,227 31.5,231.5" fill="#e01010"/><circle cx="30.8" cy="232.5" r="1.6" fill="#111"/><rect x="34" y="229.5" width="6" height="5" fill="#48b828"/><line x1="35" y1="231.2" x2="39" y2="231.2" stroke="#d8f0c8" stroke-width="0.8"/><line x1="35" y1="233" x2="39" y2="233" stroke="#d8f0c8" stroke-width="0.8"/><path d="M29 245 h4 v-2.5 h4 v2.5 h3 v4 h-3 v3 h-5 v-3 h-3 z" fill="#30c030" stroke="#188018" stroke-width="0.6"/><line x1="34.5" y1="236.5" x2="34.5" y2="243.5" stroke="#e01010" stroke-width="1.8"/><polygon points="31.5,242 37.5,242 34.5,246.5" fill="#e01010"/><path d="M30.5 269.5 v-9 M29.5 269.3 h10" fill="none" stroke="#222" stroke-width="1.1"/><path d="M31 262.5 c1 -4 6 -5 8.5 -1.5" fill="none" stroke="#e02020" stroke-width="1.3"/><path d="M33.5 263.3 h4 l-1.4 2.6 l1.4 2.6 h-4 l1.4 -2.6 z" fill="#d8d0c0" stroke="#666" stroke-width="0.6"/><polygon points="27,281.25 33.5,284.5 33.5,288 27,284.75" fill="#707070" stroke="#303030" stroke-width="0.4"/><polygon points="33.5,284.5 40,281.25 40,284.75 33.5,288" fill="#585858" stroke="#303030" stroke-width="0.4"/><polygon points="27,281.25 33.5,278 40,281.25 33.5,284.5" fill="#c0c0c0" stroke="#303030" stroke-width="0.4"/><text x="27.5" y="279" font-size="7.5" fill="#000" text-anchor="middle" font-weight="bold" font-family="Liberation Sans,sans-serif">t</text><path d="M24.5 280 l1.5 1 l-1.5 1 M24.5 284.5 l1.5 1 l-1.5 1" fill="none" stroke="#d02020" stroke-width="0.8"/><rect x="30.5" y="295" width="9" height="8" fill="#fff" rx="1" stroke="#111" stroke-width="1.1"/><line x1="32.5" y1="297.7" x2="37.5" y2="297.7" stroke="#111" stroke-width="1"/><line x1="32.5" y1="300.3" x2="37.5" y2="300.3" stroke="#111" stroke-width="1"/><line x1="30.5" y1="303" x2="27" y2="306.5" stroke="#111" stroke-width="1.3"/></svg><span class="a" style="left:13px;top:86.3px;font-size:12px;color:#000;transform-origin:0 0;transform:scaleX(0.8523);">Utility</span><span class="a" style="left:66.4px;top:86.3px;font-size:12px;color:#000;transform-origin:0 0;transform:scaleX(0.8825);">Mask</span><span class="a" style="left:118px;top:86.3px;font-size:12px;color:#000;transform-origin:0 0;transform:scaleX(0.9520);font-weight:bold;">Model</span><span class="a" style="left:172px;top:86.3px;font-size:12px;color:#000;transform-origin:0 0;transform:scaleX(0.8649);">Sol</span><span class="a" style="left:7.5px;top:166px;font-size:12px;letter-spacing:0.093px;color:#000;">Entities</span><span class="a" style="left:147px;top:166px;font-size:12px;letter-spacing:-1.000px;color:#000;">ID</span><span class="a" style="left:48.3px;top:184.7px;font-size:11.5px;letter-spacing:-0.609px;color:#000;">Assembly Hierarchy</span><span class="a" style="left:48.3px;top:202.7px;font-size:11.5px;letter-spacing:-0.642px;color:#000;">Component (2)</span><span class="a" style="left:48.3px;top:220.7px;font-size:11.5px;letter-spacing:-0.489px;color:#000;">Load Collector (2)</span><span class="a" style="left:48.3px;top:238.7px;font-size:11.5px;letter-spacing:-0.465px;color:#000;">Load Step (1)</span><span class="a" style="left:48.3px;top:256.7px;font-size:11.5px;letter-spacing:-0.587px;color:#000;">Material (1)</span><span class="a" style="left:48.3px;top:274.7px;font-size:11.5px;letter-spacing:-0.619px;color:#000;">Property (1)</span><span class="a" style="left:48.3px;top:292.7px;font-size:11.5px;letter-spacing:-0.481px;color:#000;">Title (1)</span>
<svg class="a" style="left:0;top:0" width="1366" height="768" viewBox="0 0 1366 768"><rect x="252.7" y="81.8" width="2" height="2" fill="#1a1a1a"/><rect x="260" y="81.8" width="2" height="2" fill="#1a1a1a"/><rect x="267.3" y="81.8" width="2" height="2" fill="#1a1a1a"/><rect x="274.6" y="81.8" width="2" height="2" fill="#1a1a1a"/><line x1="239.5" y1="78" x2="239.5" y2="704" stroke="#787878" stroke-width="1"/><polygon points="256,99 260,97.99 260,100.99 256,102" fill="url(#vmg)" stroke="#26265c" stroke-width="0.75"/><polygon points="256,102 260,100.99 260,103.99 256,105" fill="url(#vmg)" stroke="#26265c" stroke-width="0.75"/><polygon points="256,105 260,103.99 260,106.99 256,108" fill="url(#vmg)" stroke="#26265c" stroke-width="0.75"/><polygon points="256,108 260,106.99 260,109.99 256,111" fill="url(#vmg)" stroke="#26265c" stroke-width="0.75"/><polygon points="260,97.99 264,96.68 264,99.68 260,100.99" fill="url(#vmg)" stroke="#26265c" stroke-width="0.75"/><polygon points="260,100.99 264,99.68 264,102.68 260,103.99" fill="url(#vmg)" stroke="#26265c" stroke-width="0.75"/><polygon points="260,103.99 264,102.68 264,105.68 260,106.99" fill="url(#vmg)" stroke="#26265c" stroke-width="0.75"/><polygon points="260,106.99 264,105.68 264,108.68 260,109.99" fill="url(#vmg)" stroke="#26265c" stroke-width="0.75"/><polygon points="264,96.68 268,94.78 268,97.78 264,99.68" fill="url(#vmg)" stroke="#26265c" stroke-width="0.75"/><polygon points="264,99.68 268,97.78 268,100.78 264,102.68" fill="url(#vmg)" stroke="#26265c" stroke-width="0.75"/><polygon points="264,102.68 268,100.78 268,103.78 264,105.68" fill="url(#vmg)" stroke="#26265c" stroke-width="0.75"/><polygon points="264,105.68 268,103.78 268,106.78 264,108.68" fill="url(#vmg)" stroke="#26265c" stroke-width="0.75"/><polygon points="268,94.78 272,92 272,95 268,97.78" fill="url(#vmg)" stroke="#26265c" stroke-width="0.75"/><polygon points="268,97.78 272,95 272,98 268,100.78" fill="url(#vmg)" stroke="#26265c" stroke-width="0.75"/><polygon points="268,100.78 272,98 272,101 268,103.78" fill="url(#vmg)" stroke="#26265c" stroke-width="0.75"/><polygon points="268,103.78 272,101 272,104 268,106.78" fill="url(#vmg)" stroke="#26265c" stroke-width="0.75"/><rect x="254.5" y="100.5" width="13" height="13" fill="#fff" stroke="#d04020" stroke-width="1"/><path d="M254.5 105 h13 M254.5 109.5 h13 M259 100.5 v13 M263.5 100.5 v13" fill="none" stroke="#b0b0b0" stroke-width="0.6"/><rect x="254.5" y="100.5" width="13" height="13" fill="none" stroke="#d04020" stroke-width="1.1"/><polygon points="256,127.5 260,126.49 260,129.49 256,130.5" fill="url(#vmg)" stroke="#26265c" stroke-width="0.75"/><polygon points="256,130.5 260,129.49 260,132.49 256,133.5" fill="url(#vmg)" stroke="#26265c" stroke-width="0.75"/><polygon points="256,133.5 260,132.49 260,135.49 256,136.5" fill="url(#vmg)" stroke="#26265c" stroke-width="0.75"/><polygon points="256,136.5 260,135.49 260,138.49 256,139.5" fill="#fff" stroke="#909090" stroke-width="0.6"/><polygon points="260,126.49 264,125.18 264,128.18 260,129.49" fill="url(#vmg)" stroke="#26265c" stroke-width="0.75"/><polygon points="260,129.49 264,128.18 264,131.18 260,132.49" fill="url(#vmg)" stroke="#26265c" stroke-width="0.75"/><polygon points="260,132.49 264,131.18 264,134.18 260,135.49" fill="url(#vmg)" stroke="#26265c" stroke-width="0.75"/><polygon points="260,135.49 264,134.18 264,137.18 260,138.49" fill="#fff" stroke="#909090" stroke-width="0.6"/><polygon points="264,125.18 268,123.28 268,126.28 264,128.18" fill="url(#vmg)" stroke="#26265c" stroke-width="0.75"/><polygon points="264,128.18 268,126.28 268,129.28 264,131.18" fill="url(#vmg)" stroke="#26265c" stroke-width="0.75"/><polygon points="264,131.18 268,129.28 268,132.28 264,134.18" fill="#fff" stroke="#909090" stroke-width="0.6"/><polygon points="264,134.18 268,132.28 268,135.28 264,137.18" fill="#fff" stroke="#909090" stroke-width="0.6"/><polygon points="268,123.28 272,120.5 272,123.5 268,126.28" fill="url(#vmg)" stroke="#26265c" stroke-width="0.75"/><polygon points="268,126.28 272,123.5 272,126.5 268,129.28" fill="#fff" stroke="#909090" stroke-width="0.6"/><polygon points="268,129.28 272,126.5 272,129.5 268,132.28" fill="#fff" stroke="#909090" stroke-width="0.6"/><polygon points="268,132.28 272,129.5 272,132.5 268,135.28" fill="#fff" stroke="#909090" stroke-width="0.6"/><path d="M265 134.5 c3 1.5 7 0.5 9.5 -3 c0 4 -3 6.5 -6 6.5 l0.5 1.5 l-5 -3 z" fill="#e02020"/><polygon points="256,155.5 260,154.49 260,157.49 256,158.5" fill="url(#vmg)" stroke="#26265c" stroke-width="0.75"/><polygon points="256,158.5 260,157.49 260,160.49 256,161.5" fill="url(#vmg)" stroke="#26265c" stroke-width="0.75"/><polygon points="256,161.5 260,160.49 260,163.49 256,164.5" fill="url(#vmg)" stroke="#26265c" stroke-width="0.75"/><polygon points="256,164.5 260,163.49 260,166.49 256,167.5" fill="#fff" stroke="#909090" stroke-width="0.6"/><polygon points="260,154.49 264,153.18 264,156.18 260,157.49" fill="url(#vmg)" stroke="#26265c" stroke-width="0.75"/><polygon points="260,157.49 264,156.18 264,159.18 260,160.49" fill="url(#vmg)" stroke="#26265c" stroke-width="0.75"/><polygon points="260,160.49 264,159.18 264,162.18 260,163.49" fill="url(#vmg)" stroke="#26265c" stroke-width="0.75"/><polygon points="260,163.49 264,162.18 264,165.18 260,166.49" fill="#fff" stroke="#909090" stroke-width="0.6"/><polygon points="264,153.18 268,151.28 268,154.28 264,156.18" fill="url(#vmg)" stroke="#26265c" stroke-width="0.75"/><polygon points="264,156.18 268,154.28 268,157.28 264,159.18" fill="url(#vmg)" stroke="#26265c" stroke-width="0.75"/><polygon points="264,159.18 268,157.28 268,160.28 264,162.18" fill="#fff" stroke="#909090" stroke-width="0.6"/><polygon points="264,162.18 268,160.28 268,163.28 264,165.18" fill="#fff" stroke="#909090" stroke-width="0.6"/><polygon points="268,151.28 272,148.5 272,151.5 268,154.28" fill="url(#vmg)" stroke="#26265c" stroke-width="0.75"/><polygon points="268,154.28 272,151.5 272,154.5 268,157.28" fill="#fff" stroke="#909090" stroke-width="0.6"/><polygon points="268,157.28 272,154.5 272,157.5 268,160.28" fill="#fff" stroke="#909090" stroke-width="0.6"/><polygon points="268,160.28 272,157.5 272,160.5 268,163.28" fill="#fff" stroke="#909090" stroke-width="0.6"/><polygon points="256,183.5 260,182.49 260,185.49 256,186.5" fill="url(#vmg)" stroke="#26265c" stroke-width="0.75"/><polygon points="256,186.5 260,185.49 260,188.49 256,189.5" fill="url(#vmg)" stroke="#26265c" stroke-width="0.75"/><polygon points="256,189.5 260,188.49 260,191.49 256,192.5" fill="url(#vmg)" stroke="#26265c" stroke-width="0.75"/><polygon points="256,192.5 260,191.49 260,194.49 256,195.5" fill="url(#vmg)" stroke="#26265c" stroke-width="0.75"/><polygon points="260,182.49 264,181.18 264,184.18 260,185.49" fill="url(#vmg)" stroke="#26265c" stroke-width="0.75"/><polygon points="260,185.49 264,184.18 264,187.18 260,188.49" fill="url(#vmg)" stroke="#26265c" stroke-width="0.75"/><polygon points="260,188.49 264,187.18 264,190.18 260,191.49" fill="url(#vmg)" stroke="#26265c" stroke-width="0.75"/><polygon points="260,191.49 264,190.18 264,193.18 260,194.49" fill="url(#vmg)" stroke="#26265c" stroke-width="0.75"/><polygon points="264,181.18 268,179.28 268,182.28 264,184.18" fill="url(#vmg)" stroke="#26265c" stroke-width="0.75"/><polygon points="264,184.18 268,182.28 268,185.28 264,187.18" fill="url(#vmg)" stroke="#26265c" stroke-width="0.75"/><polygon points="264,187.18 268,185.28 268,188.28 264,190.18" fill="url(#vmg)" stroke="#26265c" stroke-width="0.75"/><polygon points="264,190.18 268,188.28 268,191.28 264,193.18" fill="url(#vmg)" stroke="#26265c" stroke-width="0.75"/><polygon points="268,179.28 272,176.5 272,179.5 268,182.28" fill="url(#vmg)" stroke="#26265c" stroke-width="0.75"/><polygon points="268,182.28 272,179.5 272,182.5 268,185.28" fill="url(#vmg)" stroke="#26265c" stroke-width="0.75"/><polygon points="268,185.28 272,182.5 272,185.5 268,188.28" fill="url(#vmg)" stroke="#26265c" stroke-width="0.75"/><polygon points="268,188.28 272,185.5 272,188.5 268,191.28" fill="url(#vmg)" stroke="#26265c" stroke-width="0.75"/><polygon points="256,211 260,209.99 260,212.99 256,214" fill="#fff" stroke="#909090" stroke-width="0.6"/><polygon points="256,214 260,212.99 260,215.99 256,217" fill="#fff" stroke="#909090" stroke-width="0.6"/><polygon points="256,217 260,215.99 260,218.99 256,220" fill="#fff" stroke="#909090" stroke-width="0.6"/><polygon points="256,220 260,218.99 260,221.99 256,223" fill="#fff" stroke="#909090" stroke-width="0.6"/><polygon points="260,209.99 264,208.68 264,211.68 260,212.99" fill="#fff" stroke="#909090" stroke-width="0.6"/><polygon points="260,212.99 264,211.68 264,214.68 260,215.99" fill="#fff" stroke="#909090" stroke-width="0.6"/><polygon points="260,215.99 264,214.68 264,217.68 260,218.99" fill="#fff" stroke="#909090" stroke-width="0.6"/><polygon points="260,218.99 264,217.68 264,220.68 260,221.99" fill="#fff" stroke="#909090" stroke-width="0.6"/><polygon points="264,208.68 268,206.78 268,209.78 264,211.68" fill="#fff" stroke="#909090" stroke-width="0.6"/><polygon points="264,211.68 268,209.78 268,212.78 264,214.68" fill="#fff" stroke="#909090" stroke-width="0.6"/><polygon points="264,214.68 268,212.78 268,215.78 264,217.68" fill="#fff" stroke="#909090" stroke-width="0.6"/><polygon points="264,217.68 268,215.78 268,218.78 264,220.68" fill="#fff" stroke="#909090" stroke-width="0.6"/><polygon points="268,206.78 272,204 272,207 268,209.78" fill="#fff" stroke="#909090" stroke-width="0.6"/><polygon points="268,209.78 272,207 272,210 268,212.78" fill="#fff" stroke="#909090" stroke-width="0.6"/><polygon points="268,212.78 272,210 272,213 268,215.78" fill="#fff" stroke="#909090" stroke-width="0.6"/><polygon points="268,215.78 272,213 272,216 268,218.78" fill="#fff" stroke="#909090" stroke-width="0.6"/><clipPath id="c5"><rect x="254.5" y="212.5" width="13" height="13"/></clipPath><g clip-path="url(#c5)"><polygon points="256,211 260,209.99 260,212.99 256,214" fill="url(#vmg)" stroke="#26265c" stroke-width="0.75"/><polygon points="256,214 260,212.99 260,215.99 256,217" fill="url(#vmg)" stroke="#26265c" stroke-width="0.75"/><polygon points="256,217 260,215.99 260,218.99 256,220" fill="url(#vmg)" stroke="#26265c" stroke-width="0.75"/><polygon points="256,220 260,218.99 260,221.99 256,223" fill="url(#vmg)" stroke="#26265c" stroke-width="0.75"/><polygon points="260,209.99 264,208.68 264,211.68 260,212.99" fill="url(#vmg)" stroke="#26265c" stroke-width="0.75"/><polygon points="260,212.99 264,211.68 264,214.68 260,215.99" fill="url(#vmg)" stroke="#26265c" stroke-width="0.75"/><polygon points="260,215.99 264,214.68 264,217.68 260,218.99" fill="url(#vmg)" stroke="#26265c" stroke-width="0.75"/><polygon points="260,218.99 264,217.68 264,220.68 260,221.99" fill="url(#vmg)" stroke="#26265c" stroke-width="0.75"/><polygon points="264,208.68 268,206.78 268,209.78 264,211.68" fill="url(#vmg)" stroke="#26265c" stroke-width="0.75"/><polygon points="264,211.68 268,209.78 268,212.78 264,214.68" fill="url(#vmg)" stroke="#26265c" stroke-width="0.75"/><polygon points="264,214.68 268,212.78 268,215.78 264,217.68" fill="url(#vmg)" stroke="#26265c" stroke-width="0.75"/><polygon points="264,217.68 268,215.78 268,218.78 264,220.68" fill="url(#vmg)" stroke="#26265c" stroke-width="0.75"/><polygon points="268,206.78 272,204 272,207 268,209.78" fill="url(#vmg)" stroke="#26265c" stroke-width="0.75"/><polygon points="268,209.78 272,207 272,210 268,212.78" fill="url(#vmg)" stroke="#26265c" stroke-width="0.75"/><polygon points="268,212.78 272,210 272,213 268,215.78" fill="url(#vmg)" stroke="#26265c" stroke-width="0.75"/><polygon points="268,215.78 272,213 272,216 268,218.78" fill="url(#vmg)" stroke="#26265c" stroke-width="0.75"/></g><rect x="254.5" y="212.5" width="13" height="13" fill="none" stroke="#d04020" stroke-width="1.1"/><circle cx="264" cy="242.5" r="9.5" fill="#fff" stroke="#d85030" stroke-width="1.2"/><polygon points="260,239 263.67,238.4 263.67,242.07 260,242.67" fill="url(#vmg)" stroke="#26265c" stroke-width="0.75"/><polygon points="260,242.67 263.67,242.07 263.67,245.73 260,246.33" fill="url(#vmg)" stroke="#26265c" stroke-width="0.75"/><polygon points="260,246.33 263.67,245.73 263.67,249.4 260,250" fill="url(#vmg)" stroke="#26265c" stroke-width="0.75"/><polygon points="263.67,238.4 267.33,237.5 267.33,241.17 263.67,242.07" fill="url(#vmg)" stroke="#26265c" stroke-width="0.75"/><polygon points="263.67,242.07 267.33,241.17 267.33,244.83 263.67,245.73" fill="url(#vmg)" stroke="#26265c" stroke-width="0.75"/><polygon points="263.67,245.73 267.33,244.83 267.33,248.5 263.67,249.4" fill="url(#vmg)" stroke="#26265c" stroke-width="0.75"/><polygon points="267.33,237.5 271,236 271,239.67 267.33,241.17" fill="url(#vmg)" stroke="#26265c" stroke-width="0.75"/><polygon points="267.33,241.17 271,239.67 271,243.33 267.33,244.83" fill="url(#vmg)" stroke="#26265c" stroke-width="0.75"/><polygon points="267.33,244.83 271,243.33 271,247 267.33,248.5" fill="url(#vmg)" stroke="#26265c" stroke-width="0.75"/><line x1="259.5" y1="264.5" x2="266" y2="263.5" stroke="#1c1c58" stroke-width="3.5" stroke-linecap="round"/><line x1="258.3" y1="266" x2="261.3" y2="276.5" stroke="#1c1c58" stroke-width="6.4" stroke-linecap="round"/><line x1="265.8" y1="265.2" x2="271.3" y2="270.5" stroke="#1c1c58" stroke-width="6.4" stroke-linecap="round"/><line x1="257.6" y1="267" x2="260.6" y2="276.8" stroke="#8088d0" stroke-width="2" stroke-linecap="round"/><line x1="267" y1="264.6" x2="272" y2="269.4" stroke="#8088d0" stroke-width="2" stroke-linecap="round"/><ellipse cx="261.6" cy="277.3" rx="2.9" ry="1.9" fill="#b0b8f0" transform="rotate(-15 261.6 277.3)"/><ellipse cx="272" cy="271.2" rx="2.9" ry="1.9" fill="#b0b8f0" transform="rotate(45 272 271.2)"/><circle cx="259.3" cy="294" r="5" fill="#3030b0"/><rect x="258.5" y="293" width="1.8" height="4.2" fill="#fff"/><circle cx="259.4" cy="291" r="1" fill="#fff"/><text x="264" y="311" font-size="9.5" fill="#444" text-anchor="middle" font-weight="bold" font-family="Liberation Sans,sans-serif" letter-spacing="0.5">123</text><rect x="250.5" y="314.5" width="26" height="25" fill="url(#obtn)" stroke="#c0a080" stroke-width="1"/><path d="M254.8 330 v6.5 M273.2 324.5 v6.5 M254.8 334 L273.2 327.5" fill="none" stroke="#504878" stroke-width="1.5"/><text x="254" y="328.5" font-size="7.5" fill="#333" text-anchor="middle" font-weight="normal" font-family="Liberation Sans,sans-serif">0</text><text x="273" y="322" font-size="7.5" fill="#333" text-anchor="middle" font-weight="normal" font-family="Liberation Sans,sans-serif">1</text><text x="269" y="338.5" font-size="7" fill="#333" text-anchor="middle" font-weight="normal" font-family="Liberation Sans,sans-serif">+10'</text><rect x="250.5" y="342" width="26" height="25" fill="url(#obtn)" stroke="#c0a080" stroke-width="1"/><path d="M253 348.5 l8 -1.5 v8 l-8 1.5 z" fill="#8888c0" stroke="#404078" stroke-width="0.7"/><path d="M257 347.8 v8 M253 352.5 l8 -1.5" fill="none" stroke="#404078" stroke-width="0.7"/><text x="265" y="365" font-size="8.5" fill="#7a5a40" text-anchor="middle" font-weight="bold" font-family="Liberation Sans,sans-serif" letter-spacing="0.4">ABC</text><rect x="250.5" y="370" width="26" height="25" fill="url(#obtn)" stroke="#c0a080" stroke-width="1"/><line x1="254.7" y1="372" x2="254.7" y2="381" stroke="#d01010" stroke-width="1.6"/><polygon points="252.3,379.5 257.1,379.5 254.7,384" fill="#d01010"/><circle cx="254.7" cy="385" r="1.5" fill="#111"/><text x="265" y="393" font-size="8.5" fill="#7a5a40" text-anchor="middle" font-weight="bold" font-family="Liberation Sans,sans-serif" letter-spacing="0.4">ABC</text><path d="M253 406 l12 -3 v6 l-12 3 z" fill="#8c8cc4" stroke="#404078" stroke-width="0.6"/><line x1="259" y1="404.5" x2="259" y2="410.5" stroke="#404078" stroke-width="0.6"/><path d="M262.5 413.5 l12 -4 v6.5 l-12 4 z" fill="#8c8cc4" stroke="#404078" stroke-width="0.6"/><line x1="268.5" y1="411.5" x2="268.5" y2="418" stroke="#404078" stroke-width="0.6"/><line x1="255.5" y1="400" x2="255.5" y2="405" stroke="#d01010" stroke-width="1.6"/><polygon points="253,403.5 258,403.5 255.5,407.5" fill="#d01010"/><line x1="272.5" y1="416" x2="272.5" y2="420" stroke="#d01010" stroke-width="1.6"/><polygon points="270,419 275,419 272.5,423" fill="#d01010"/><path d="M268 403 a3.5 3.5 0 0 1 6 1.5 M274 408 a3.5 3.5 0 0 1 -6 -1.5" fill="none" stroke="#a0a0a0" stroke-width="1.4"/><rect x="250.5" y="426" width="26" height="25.5" fill="url(#obtn)" stroke="#c0a080" stroke-width="1"/><path d="M255.5 436 l16 -5 v13.5 l-16 4.5 z" fill="url(#bquad)" stroke="#303050" stroke-width="1"/><circle cx="255.5" cy="436" r="1.7" fill="#fff" stroke="#222" stroke-width="0.9"/><circle cx="271.5" cy="431" r="1.7" fill="#fff" stroke="#222" stroke-width="0.9"/><circle cx="271.5" cy="444.5" r="1.7" fill="#fff" stroke="#222" stroke-width="0.9"/><circle cx="255.5" cy="449" r="1.7" fill="#fff" stroke="#222" stroke-width="0.9"/></svg>
<div id="vp" class="a"></div>
<svg class="a" style="left:0;top:0" width="1366" height="768" viewBox="0 0 1366 768"><polygon points="604,332.5 979.5,303.5 977,310.8 611.2,341" fill="#fcc030"/><path d="M604 332.5L611.2 341M606.93 332.27L614.06 340.76M609.87 332.05L616.92 340.53M612.8 331.82L619.77 340.29M615.73 331.59L622.63 340.06M618.67 331.37L625.49 339.82M621.6 331.14L628.35 339.58M624.54 330.91L631.2 339.35M627.47 330.69L634.06 339.11M630.4 330.46L636.92 338.88M633.34 330.23L639.78 338.64M636.27 330.01L642.64 338.4M639.2 329.78L645.49 338.17M642.14 329.55L648.35 337.93M645.07 329.33L651.21 337.7M648 329.1L654.07 337.46M650.94 328.88L656.93 337.23M653.87 328.65L659.78 336.99M656.8 328.42L662.64 336.75M659.74 328.2L665.5 336.52M662.67 327.97L668.36 336.28M665.61 327.74L671.21 336.05M668.54 327.52L674.07 335.81M671.47 327.29L676.93 335.57M674.41 327.06L679.79 335.34M677.34 326.84L682.65 335.1M680.27 326.61L685.5 334.87M683.21 326.38L688.36 334.63M686.14 326.16L691.22 334.39M689.07 325.93L694.08 334.16M692.01 325.7L696.93 333.92M694.94 325.48L699.79 333.69M697.88 325.25L702.65 333.45M700.81 325.02L705.51 333.21M703.74 324.8L708.37 332.98M706.68 324.57L711.22 332.74M709.61 324.34L714.08 332.51M712.54 324.12L716.94 332.27M715.48 323.89L719.8 332.03M718.41 323.66L722.65 331.8M721.34 323.44L725.51 331.56M724.28 323.21L728.37 331.33M727.21 322.98L731.23 331.09M730.14 322.76L734.09 330.85M733.08 322.53L736.94 330.62M736.01 322.3L739.8 330.38M738.95 322.08L742.66 330.15M741.88 321.85L745.52 329.91M744.81 321.62L748.38 329.68M747.75 321.4L751.23 329.44M750.68 321.17L754.09 329.2M753.61 320.95L756.95 328.97M756.55 320.72L759.81 328.73M759.48 320.49L762.66 328.5M762.41 320.27L765.52 328.26M765.35 320.04L768.38 328.02M768.28 319.81L771.24 327.79M771.21 319.59L774.1 327.55M774.15 319.36L776.95 327.32M777.08 319.13L779.81 327.08M780.02 318.91L782.67 326.84M782.95 318.68L785.53 326.61M785.88 318.45L788.38 326.37M788.82 318.23L791.24 326.14M791.75 318L794.1 325.9M794.68 317.77L796.96 325.66M797.62 317.55L799.82 325.43M800.55 317.32L802.67 325.19M803.48 317.09L805.53 324.96M806.42 316.87L808.39 324.72M809.35 316.64L811.25 324.48M812.29 316.41L814.1 324.25M815.22 316.19L816.96 324.01M818.15 315.96L819.82 323.78M821.09 315.73L822.68 323.54M824.02 315.51L825.54 323.3M826.95 315.28L828.39 323.07M829.89 315.05L831.25 322.83M832.82 314.83L834.11 322.6M835.75 314.6L836.97 322.36M838.69 314.38L839.83 322.12M841.62 314.15L842.68 321.89M844.55 313.92L845.54 321.65M847.49 313.7L848.4 321.42M850.42 313.47L851.26 321.18M853.36 313.24L854.11 320.95M856.29 313.02L856.97 320.71M859.22 312.79L859.83 320.47M862.16 312.56L862.69 320.24M865.09 312.34L865.55 320M868.02 312.11L868.4 319.77M870.96 311.88L871.26 319.53M873.89 311.66L874.12 319.29M876.82 311.43L876.98 319.06M879.76 311.2L879.83 318.82M882.69 310.98L882.69 318.59M885.62 310.75L885.55 318.35M888.56 310.52L888.41 318.11M891.49 310.3L891.27 317.88M894.43 310.07L894.12 317.64M897.36 309.84L896.98 317.41M900.29 309.62L899.84 317.17M903.23 309.39L902.7 316.93M906.16 309.16L905.55 316.7M909.09 308.94L908.41 316.46M912.03 308.71L911.27 316.23M914.96 308.48L914.13 315.99M917.89 308.26L916.99 315.75M920.83 308.03L919.84 315.52M923.76 307.8L922.7 315.28M926.7 307.58L925.56 315.05M929.63 307.35L928.42 314.81M932.56 307.12L931.27 314.57M935.5 306.9L934.13 314.34M938.43 306.67L936.99 314.1M941.36 306.45L939.85 313.87M944.3 306.22L942.71 313.63M947.23 305.99L945.56 313.4M950.16 305.77L948.42 313.16M953.1 305.54L951.28 312.92M956.03 305.31L954.14 312.69M958.96 305.09L957 312.45M961.9 304.86L959.85 312.22M964.83 304.63L962.71 311.98M967.77 304.41L965.57 311.74M970.7 304.18L968.43 311.51M973.63 303.95L971.28 311.27M976.57 303.73L974.14 311.04M979.5 303.5L977 310.8M604 332.5L979.5 303.5M606.4 335.33L978.67 305.93M608.8 338.17L977.83 308.37M611.2 341L977 310.8" fill="none" stroke="#7c4e02" stroke-width="1"/><polygon points="592.6,315.2 989.2,283.4 979.5,302.9 604,332.2" fill="#ffc62e"/><path d="M592.6 315.2L604 332.2M595.56 314.96L606.8 331.98M598.52 314.73L609.6 331.76M601.48 314.49L612.41 331.54M604.44 314.25L615.21 331.33M607.4 314.01L618.01 331.11M610.36 313.78L620.81 330.89M613.32 313.54L623.62 330.67M616.28 313.3L626.42 330.45M619.24 313.06L629.22 330.23M622.2 312.83L632.02 330.01M625.16 312.59L634.82 329.79M628.12 312.35L637.63 329.58M631.08 312.11L640.43 329.36M634.04 311.88L643.23 329.14M637 311.64L646.03 328.92M639.96 311.4L648.84 328.7M642.91 311.17L651.64 328.48M645.87 310.93L654.44 328.26M648.83 310.69L657.24 328.05M651.79 310.45L660.04 327.83M654.75 310.22L662.85 327.61M657.71 309.98L665.65 327.39M660.67 309.74L668.45 327.17M663.63 309.5L671.25 326.95M666.59 309.27L674.06 326.73M669.55 309.03L676.86 326.51M672.51 308.79L679.66 326.3M675.47 308.56L682.46 326.08M678.43 308.32L685.26 325.86M681.39 308.08L688.07 325.64M684.35 307.84L690.87 325.42M687.31 307.61L693.67 325.2M690.27 307.37L696.47 324.98M693.23 307.13L699.28 324.77M696.19 306.89L702.08 324.55M699.15 306.66L704.88 324.33M702.11 306.42L707.68 324.11M705.07 306.18L710.49 323.89M708.03 305.94L713.29 323.67M710.99 305.71L716.09 323.45M713.95 305.47L718.89 323.24M716.91 305.23L721.69 323.02M719.87 305L724.5 322.8M722.83 304.76L727.3 322.58M725.79 304.52L730.1 322.36M728.75 304.28L732.9 322.14M731.71 304.05L735.71 321.92M734.67 303.81L738.51 321.7M737.63 303.57L741.31 321.49M740.59 303.33L744.11 321.27M743.54 303.1L746.91 321.05M746.5 302.86L749.72 320.83M749.46 302.62L752.52 320.61M752.42 302.39L755.32 320.39M755.38 302.15L758.12 320.17M758.34 301.91L760.93 319.96M761.3 301.67L763.73 319.74M764.26 301.44L766.53 319.52M767.22 301.2L769.33 319.3M770.18 300.96L772.13 319.08M773.14 300.72L774.94 318.86M776.1 300.49L777.74 318.64M779.06 300.25L780.54 318.42M782.02 300.01L783.34 318.21M784.98 299.77L786.15 317.99M787.94 299.54L788.95 317.77M790.9 299.3L791.75 317.55M793.86 299.06L794.55 317.33M796.82 298.83L797.35 317.11M799.78 298.59L800.16 316.89M802.74 298.35L802.96 316.68M805.7 298.11L805.76 316.46M808.66 297.88L808.56 316.24M811.62 297.64L811.37 316.02M814.58 297.4L814.17 315.8M817.54 297.16L816.97 315.58M820.5 296.93L819.77 315.36M823.46 296.69L822.57 315.14M826.42 296.45L825.38 314.93M829.38 296.21L828.18 314.71M832.34 295.98L830.98 314.49M835.3 295.74L833.78 314.27M838.26 295.5L836.59 314.05M841.21 295.27L839.39 313.83M844.17 295.03L842.19 313.61M847.13 294.79L844.99 313.4M850.09 294.55L847.79 313.18M853.05 294.32L850.6 312.96M856.01 294.08L853.4 312.74M858.97 293.84L856.2 312.52M861.93 293.6L859 312.3M864.89 293.37L861.81 312.08M867.85 293.13L864.61 311.86M870.81 292.89L867.41 311.65M873.77 292.66L870.21 311.43M876.73 292.42L873.01 311.21M879.69 292.18L875.82 310.99M882.65 291.94L878.62 310.77M885.61 291.71L881.42 310.55M888.57 291.47L884.22 310.33M891.53 291.23L887.03 310.12M894.49 290.99L889.83 309.9M897.45 290.76L892.63 309.68M900.41 290.52L895.43 309.46M903.37 290.28L898.24 309.24M906.33 290.04L901.04 309.02M909.29 289.81L903.84 308.8M912.25 289.57L906.64 308.59M915.21 289.33L909.44 308.37M918.17 289.1L912.25 308.15M921.13 288.86L915.05 307.93M924.09 288.62L917.85 307.71M927.05 288.38L920.65 307.49M930.01 288.15L923.46 307.27M932.97 287.91L926.26 307.05M935.93 287.67L929.06 306.84M938.89 287.43L931.86 306.62M941.84 287.2L934.66 306.4M944.8 286.96L937.47 306.18M947.76 286.72L940.27 305.96M950.72 286.49L943.07 305.74M953.68 286.25L945.87 305.52M956.64 286.01L948.68 305.31M959.6 285.77L951.48 305.09M962.56 285.54L954.28 304.87M965.52 285.3L957.08 304.65M968.48 285.06L959.88 304.43M971.44 284.82L962.69 304.21M974.4 284.59L965.49 303.99M977.36 284.35L968.29 303.77M980.32 284.11L971.09 303.56M983.28 283.87L973.9 303.34M986.24 283.64L976.7 303.12M989.2 283.4L979.5 302.9M592.6 315.2L989.2 283.4M594.5 318.03L987.58 286.65M596.4 320.87L985.97 289.9M598.3 323.7L984.35 293.15M600.2 326.53L982.73 296.4M602.1 329.37L981.12 299.65M604 332.2L979.5 302.9" fill="none" stroke="#7c4e02" stroke-width="1"/><path d="M603.5 332.3 L979.5 303.2" fill="none" stroke="#6e4804" stroke-width="2.2"/><path d="M592.6 315.2 L989.2 283.4 L979.5 302.9 L977 310.8 L611.2 341 L604 332.2 Z" fill="none" stroke="#6e4804" stroke-width="1.1"/><path d="M592.6 312.5 v3 M989.2 281 v3" fill="none" stroke="#6e4804" stroke-width="1"/><circle cx="663.7" cy="318.3" r="3.6" fill="#e08c20"/><circle cx="663.7" cy="318.3" r="1.9" fill="#e81c1c"/><circle cx="918.8" cy="297.5" r="3.6" fill="#e08c20"/><circle cx="918.8" cy="297.5" r="1.9" fill="#e81c1c"/><rect x="817.5" y="293.5" width="6.5" height="6" fill="none" stroke="#3466a4" stroke-width="1.1"/><path d="M301 458 L322 457 L338 454.8 Q341.5 455.6 338.5 457.2 L322 459 Z" fill="#20e020" stroke="#20e020" stroke-width="0.8"/><path d="M301 458.5 L303.3 481 L302.6 492 Q304 499 305.5 492 L305.6 481 Z" fill="#e82020"/><line x1="301" y1="458.5" x2="303.5" y2="492" stroke="#e82020" stroke-width="1.3"/><path d="M302.5 483 q-1.5 5 0 9" fill="none" stroke="#e82020" stroke-width="1.3"/><circle cx="301" cy="458" r="2.6" fill="#1818d8"/><text x="301" y="457.5" font-size="14" fill="#fff" text-anchor="start" font-weight="normal" font-family="Liberation Sans,sans-serif">Z</text><text x="346" y="458" font-size="14" fill="#fff" text-anchor="start" font-weight="normal" font-family="Liberation Sans,sans-serif">Y</text><text x="303" y="507" font-size="14" fill="#fff" text-anchor="start" font-weight="normal" font-family="Liberation Sans,sans-serif">X</text><path d="M1234.5 505.5 v6.5 h111 v-6.5" fill="none" stroke="#404040" stroke-width="1.6"/><text x="1207.5" y="514" font-size="10.5" fill="#404040" text-anchor="start" font-weight="bold" font-family="Liberation Sans,sans-serif" letter-spacing="0.9">300</text><path d="M1011.5 373 h3 v6.5 h6.5 v3 h-6.5 v6.5 h-3 v-6.5 h-6.5 v-3 h6.5 z" fill="#fff" stroke="#222" stroke-width="1"/><circle cx="1316" cy="355" r="37" fill="url(#cbtn)"/><text x="1316" y="359.5" font-size="12" fill="#333" text-anchor="middle" font-weight="normal" font-family="Liberation Sans,Noto Sans CJK SC,sans-serif">连接资源</text><rect x="1356" y="78" width="10" height="626" fill="#f0f0f0"/><line x1="1362.5" y1="78" x2="1362.5" y2="704" stroke="#707070" stroke-width="1"/><rect x="1363" y="200" width="3" height="92" fill="url(#photo)"/><rect x="1356.5" y="232" width="5" height="55" fill="#2a3a40" rx="2" stroke="#1a2428" stroke-width="0.5"/><rect x="1358" y="236" width="2.2" height="48" fill="url(#meter)"/></svg><span class="a" style="left:1232.5px;top:86.5px;font-size:13.5px;letter-spacing:-0.178px;color:#fff;">Model Info: Untitled*</span>
<svg class="a" style="left:0;top:0" width="1366" height="768" viewBox="0 0 1366 768"><rect x="247.7" y="520.6" width="2" height="2" fill="#1a1a1a"/><rect x="247.7" y="527.7" width="2" height="2" fill="#1a1a1a"/><rect x="247.7" y="534.8" width="2" height="2" fill="#1a1a1a"/><rect x="247.7" y="541.9" width="2" height="2" fill="#1a1a1a"/><path d="M257 523.5 q0 -1.5 1.5 -1.5 h6.48 q1 0 1.5 1 l0.8 1.2 h6.22 q1.5 0 1.5 1.5 v10.3 q0 1.5 -1.5 1.5 h-15 q-1.5 0 -1.5 -1.5 z" fill="url(#yfold)" stroke="#e0bc70" stroke-width="0.7"/><polygon points="263,532 268,534.5 268,537 263,534.5" fill="#1f9a1f"/><polygon points="268,534.5 273,532 273,534.5 268,537" fill="#168016"/><polygon points="263,532 268,529.5 273,532 268,534.5" fill="#4fe04f"/><polygon points="258,537.5 263,540 263,543 258,540.5" fill="#1a28b8"/><polygon points="263,540 268,537.5 268,540.5 263,543" fill="#101a90"/><polygon points="258,537.5 263,535 268,537.5 263,540" fill="#5a6cf4"/><polygon points="269.5,538 274.5,540.5 274.5,543.5 269.5,541" fill="#d08818"/><polygon points="274.5,540.5 279.5,538 279.5,541 274.5,543.5" fill="#a86808"/><polygon points="269.5,538 274.5,535.5 279.5,538 274.5,540.5" fill="#f4b040"/><path d="M285 523.5 q0 -1.5 1.5 -1.5 h6.48 q1 0 1.5 1 l0.8 1.2 h6.22 q1.5 0 1.5 1.5 v10.3 q0 1.5 -1.5 1.5 h-15 q-1.5 0 -1.5 -1.5 z" fill="url(#yfold)" stroke="#e0bc70" stroke-width="0.7"/><polygon points="289,534.75 297.5,539 297.5,543.5 289,539.25" fill="#2020d0" stroke="#1010a0" stroke-width="0.4"/><polygon points="297.5,539 306,534.75 306,539.25 297.5,543.5" fill="#1414a8" stroke="#1010a0" stroke-width="0.4"/><polygon points="289,534.75 297.5,530.5 306,534.75 297.5,539" fill="#6c6cf4" stroke="#1010a0" stroke-width="0.4"/><path d="M313 523.5 q0 -1.5 1.5 -1.5 h6.48 q1 0 1.5 1 l0.8 1.2 h6.22 q1.5 0 1.5 1.5 v10.3 q0 1.5 -1.5 1.5 h-15 q-1.5 0 -1.5 -1.5 z" fill="url(#yfold)" stroke="#e0bc70" stroke-width="0.7"/><path d="M320.8 543 v-10 M320 542.6 h13" fill="none" stroke="#222" stroke-width="1.2"/><path d="M321 534.5 c1 -5 8 -7 12 -2" fill="none" stroke="#e02020" stroke-width="1.5"/><path d="M325 535.5 h5 l-1.8 3.3 l1.8 3.3 h-5 l1.8 -3.3 z" fill="#d8d0c0" stroke="#666" stroke-width="0.7"/><path d="M341 523.5 q0 -1.5 1.5 -1.5 h6.48 q1 0 1.5 1 l0.8 1.2 h6.22 q1.5 0 1.5 1.5 v10.3 q0 1.5 -1.5 1.5 h-15 q-1.5 0 -1.5 -1.5 z" fill="url(#yfold)" stroke="#e0bc70" stroke-width="0.7"/><polygon points="346,534.75 354.5,539 354.5,543 346,538.75" fill="#787878" stroke="#303030" stroke-width="0.4"/><polygon points="354.5,539 363,534.75 363,538.75 354.5,543" fill="#585858" stroke="#303030" stroke-width="0.4"/><polygon points="346,534.75 354.5,530.5 363,534.75 354.5,539" fill="#b8b8b8" stroke="#303030" stroke-width="0.4"/><text x="346.8" y="531.5" font-size="8.5" fill="#000" text-anchor="middle" font-weight="bold" font-family="Liberation Sans,sans-serif">t</text><path d="M342.3 534.5 h2.6 M343.6 533 v1.5 M342.3 539 h2.6 M343.6 539 v1.5" fill="none" stroke="#d02020" stroke-width="0.8"/><path d="M369 523.5 q0 -1.5 1.5 -1.5 h6.48 q1 0 1.5 1 l0.8 1.2 h6.22 q1.5 0 1.5 1.5 v10.3 q0 1.5 -1.5 1.5 h-15 q-1.5 0 -1.5 -1.5 z" fill="url(#yfold)" stroke="#e0bc70" stroke-width="0.7"/><line x1="379.5" y1="523.5" x2="379.5" y2="534" stroke="#d81010" stroke-width="2.6"/><polygon points="375.3,532.5 383.7,532.5 379.5,539" fill="#d81010"/><circle cx="379.3" cy="541.5" r="2" fill="#111"/><rect x="383" y="537" width="8" height="7" fill="#58b828"/><line x1="384" y1="539.2" x2="390" y2="539.2" stroke="#c8e8a8" stroke-width="0.9"/><line x1="384" y1="541.7" x2="390" y2="541.7" stroke="#c8e8a8" stroke-width="0.9"/><path d="M397 523 q0 -1.5 1.5 -1.5 h6.48 q1 0 1.5 1 l0.8 1.2 h6.22 q1.5 0 1.5 1.5 v10.3 q0 1.5 -1.5 1.5 h-15 q-1.5 0 -1.5 -1.5 z" fill="url(#yfold)" stroke="#e0bc70" stroke-width="0.7"/><path d="M407 527 v8 M407 535 l-5 3.5 M407 535 l5.5 3" fill="none" stroke="#6868a0" stroke-width="1.8"/><rect x="411" y="536" width="8" height="7" fill="#58b828"/><line x1="412" y1="538.2" x2="418" y2="538.2" stroke="#c8e8a8" stroke-width="0.9"/><line x1="412" y1="540.7" x2="418" y2="540.7" stroke="#c8e8a8" stroke-width="0.9"/><polygon points="423.75,531.4 429.25,531.4 426.5,534.6" fill="#000"/><line x1="436.5" y1="524" x2="436.5" y2="541" stroke="#a8a8a8" stroke-width="1"/><path d="M450 527 L463 540 M463 527 L450 540" fill="none" stroke="#c81c1c" stroke-width="6.6" stroke-linecap="round"/><path d="M450 527 L463 540 M463 527 L450 540" fill="none" stroke="#f04848" stroke-width="4.4" stroke-linecap="round"/><path d="M473.5 534 q0 -7 8 -9 l4.5 -1 v11 l-12.5 3 z" fill="#a0a0a0" stroke="#606060" stroke-width="0.8"/><path d="M477.5 536 q0 -7 8 -9 l4.5 -1 v11 l-12.5 3 z" fill="#a0a0a0" stroke="#606060" stroke-width="0.8"/><path d="M481.5 538 q0 -7 8 -9 l4.5 -1 v11 l-12.5 3 z" fill="#a0a0a0" stroke="#606060" stroke-width="0.8"/><path d="M501 525 q0 -1.5 1.5 -1.5 h5.76 q1 0 1.5 1 l0.8 1.2 h4.94 q1.5 0 1.5 1.5 v8.3 q0 1.5 -1.5 1.5 h-13 q-1.5 0 -1.5 -1.5 z" fill="url(#yfold)" stroke="#e0bc70" stroke-width="0.7"/><path d="M506.5 529.5 q0 -1.5 1.5 -1.5 h5.94 q1 0 1.5 1 l0.8 1.2 h5.26 q1.5 0 1.5 1.5 v9.3 q0 1.5 -1.5 1.5 h-13.5 q-1.5 0 -1.5 -1.5 z" fill="url(#yfold)" stroke="#e0bc70" stroke-width="0.7"/><path d="M503 534 q3 4 7 4 v-2.5 l5 4 l-5 4 v-2.5 q-6 0 -7 -7 z" fill="#e02020"/><text x="542" y="529.5" font-size="8.5" fill="#555" text-anchor="middle" font-weight="bold" font-family="Liberation Sans,sans-serif">2</text><text x="539" y="536.5" font-size="8.5" fill="#555" text-anchor="middle" font-weight="bold" font-family="Liberation Sans,sans-serif">1</text><text x="539" y="543.5" font-size="8.5" fill="#555" text-anchor="middle" font-weight="bold" font-family="Liberation Sans,sans-serif">3</text><path d="M533 527.5 q1 3 4 3 M547.5 534 q-1 -3 -4 -3" fill="none" stroke="#d02020" stroke-width="1.2"/><polygon points="531.5,529.5 535,526 535.5,530" fill="#d02020"/><polygon points="549,532 545.5,535.5 545,531.5" fill="#d02020"/><rect x="561" y="521" width="2" height="2" fill="#1a1a1a"/><rect x="561" y="528.1" width="2" height="2" fill="#1a1a1a"/><rect x="561" y="535.2" width="2" height="2" fill="#1a1a1a"/><rect x="561" y="542.3" width="2" height="2" fill="#1a1a1a"/><rect x="567" y="522" width="98.5" height="21" fill="url(#combo)"/><rect x="650.5" y="523" width="14" height="19" fill="#efefef"/><path d="M568 530.25 C569.28 525.25 574.72 523 577.92 525.75 L584 532.25 C581.76 529.25 577.28 530.25 575.2 536.5 Z" fill="url(#psurf)" stroke="#404070" stroke-width="0.8"/><path d="M584 532.25 C582.72 531 580.8 531.25 579.84 532.75" fill="none" stroke="#404070" stroke-width="0.8"/><rect x="568" y="539" width="16" height="3" fill="url(#rainbow)" rx="1.5"/><polygon points="654,530.8 661,530.8 657.5,534.8" fill="#000"/><path d="M669 532 C670.76 525.6 678.24 522.72 682.64 526.24 L691 534.56 C687.92 530.72 681.76 532 678.9 540 Z" fill="#fafafa" stroke="#333" stroke-width="0.8"/><path d="M691 534.56 C689.24 532.96 686.6 533.28 685.28 535.2" fill="none" stroke="#333" stroke-width="0.8"/><polygon points="695.5,531.5 700.5,531.5 698,534.5" fill="#000"/><path d="M706 532 C707.76 525.6 715.24 522.72 719.64 526.24 L728 534.56 C724.92 530.72 718.76 532 715.9 540 Z" fill="url(#psurf)" stroke="#303060" stroke-width="0.8"/><path d="M728 534.56 C726.24 532.96 723.6 533.28 722.28 535.2" fill="none" stroke="#303060" stroke-width="0.8"/><polygon points="734,531.5 739,531.5 736.5,534.5" fill="#000"/><path d="M745 528.5 l11 -5 l10.5 4 v11 l-11 5.5 l-10.5 -5 z" fill="#a8a8dc" stroke="#40407c" stroke-width="0.8"/><path d="M745 528.5 l10.5 4.5 l11 -5.5 M755.5 533 v11" fill="none" stroke="#40407c" stroke-width="0.8"/><path d="M757 534 l8 -4 v7.5 l-8 4 z" fill="#d4d4f0" stroke="#6060a0" stroke-width="0.5"/><line x1="774.5" y1="524" x2="774.5" y2="541" stroke="#a8a8a8" stroke-width="1"/><rect x="779" y="522" width="106" height="21" fill="url(#combo)"/><rect x="869.5" y="523" width="15" height="19" fill="#efefef"/><polygon points="781,526 789,530 789,537.5 781,533.5" fill="#5c5ca0" stroke="#2c2c60" stroke-width="0.4"/><polygon points="789,530 797,526 797,533.5 789,537.5" fill="#48488c" stroke="#2c2c60" stroke-width="0.4"/><polygon points="781,526 789,522 797,526 789,530" fill="#8c8cc8" stroke="#2c2c60" stroke-width="0.4"/><path d="M785 524 L793 528 M793 524 L785 528 M785 528 V535.5 M793 528 V535.5 M781 529.75 L789 533.75 L797 529.75" fill="none" stroke="#2c2c60" stroke-width="0.5"/><rect x="781" y="539.5" width="16" height="3" fill="url(#rainbow)" rx="1.5"/><polygon points="873,530.8 880,530.8 876.5,534.8" fill="#000"/><polygon points="888,527.25 898.5,532.5 898.5,543 888,537.75" fill="#fff" stroke="#222" stroke-width="0.4"/><polygon points="898.5,532.5 909,527.25 909,537.75 898.5,543" fill="#fff" stroke="#222" stroke-width="0.4"/><polygon points="888,527.25 898.5,522 909,527.25 898.5,532.5" fill="#fff" stroke="#222" stroke-width="0.4"/><path d="M893.25 524.62 L903.75 529.88 M903.75 524.62 L893.25 529.88 M893.25 529.88 V540.38 M903.75 529.88 V540.38 M888 532.5 L898.5 537.75 L909 532.5" fill="none" stroke="#222" stroke-width="0.8"/><path d="M888 527.25 L898.5 522 L909 527.25 V537.75 L898.5 543 L888 537.75 Z M888 527.25 L898.5 532.5 L909 527.25 M898.5 532.5 V543" fill="none" stroke="#222" stroke-width="0.8"/><polygon points="915,531.5 920,531.5 917.5,534.5" fill="#000"/><polygon points="926,527.25 936.5,532.5 936.5,543 926,537.75" fill="#5c5ca0" stroke="#2c2c60" stroke-width="0.4"/><polygon points="936.5,532.5 947,527.25 947,537.75 936.5,543" fill="#48488c" stroke="#2c2c60" stroke-width="0.4"/><polygon points="926,527.25 936.5,522 947,527.25 936.5,532.5" fill="#8c8cc8" stroke="#2c2c60" stroke-width="0.4"/><path d="M931.25 524.62 L941.75 529.88 M941.75 524.62 L931.25 529.88 M931.25 529.88 V540.38 M941.75 529.88 V540.38 M926 532.5 L936.5 537.75 L947 532.5" fill="none" stroke="#2c2c60" stroke-width="0.6"/><polygon points="953,531.5 958,531.5 955.5,534.5" fill="#000"/><line x1="969" y1="536" x2="981.5" y2="530" stroke="#444" stroke-width="1.8"/><polygon points="991,531.5 996,531.5 993.5,534.5" fill="#000"/><polygon points="1002,532.5 1012.5,527 1023,532.5 1012.5,538" fill="#8c8c8c" stroke="#555" stroke-width="0.6"/><path d="M1007.2 529.8 l10.5 5.5 M1017.7 529.8 l-10.5 5.5" fill="none" stroke="#555" stroke-width="0.7"/><polygon points="1029,531.5 1034,531.5 1031.5,534.5" fill="#000"/><polygon points="1040,530.25 1050.5,535.5 1050.5,540 1040,534.75" fill="#5050c8" stroke="#2828a0" stroke-width="0.4"/><polygon points="1050.5,535.5 1061,530.25 1061,534.75 1050.5,540" fill="#3838b0" stroke="#2828a0" stroke-width="0.4"/><polygon points="1040,530.25 1050.5,525 1061,530.25 1050.5,535.5" fill="#a8a8f4" stroke="#2828a0" stroke-width="0.4"/><polygon points="1067,531.5 1072,531.5 1069.5,534.5" fill="#000"/><path d="M1082 532 l5 -1.5 v4.5 l-5 1.5 z" fill="#8484c4" stroke="#5050a0" stroke-width="0.5"/><path d="M1082 539 l5 -1.5 v4.5 l-5 1.5 z" fill="#8484c4" stroke="#5050a0" stroke-width="0.5"/><path d="M1090 527.5 l5 -1.5 v4.5 l-5 1.5 z" fill="#8484c4" stroke="#5050a0" stroke-width="0.5"/><path d="M1090 535 l5 -1.5 v4.5 l-5 1.5 z" fill="#8484c4" stroke="#5050a0" stroke-width="0.5"/><rect x="1107.5" y="524" width="19.5" height="15" fill="#5a7088" rx="1.2"/><rect x="1109" y="525.5" width="16.5" height="12" fill="url(#mon)"/><polygon points="1115,539 1119.5,539 1120.5,542.5 1114,542.5" fill="#505860"/><rect x="1112" y="542.3" width="10.5" height="1.6" fill="#707880"/><rect x="1138" y="521" width="2" height="2" fill="#1a1a1a"/><rect x="1138" y="528.1" width="2" height="2" fill="#1a1a1a"/><rect x="1138" y="535.2" width="2" height="2" fill="#1a1a1a"/><rect x="1138" y="542.3" width="2" height="2" fill="#1a1a1a"/><polygon points="1158,524 1160.7,530.78 1167.99,531.26 1162.37,535.92 1164.17,542.99 1158,539.1 1151.83,542.99 1153.63,535.92 1148.01,531.26 1155.3,530.78" fill="url(#star)" stroke="#c89000" stroke-width="0.8"/></svg><span class="a" style="left:588.5px;top:527px;font-size:11.5px;letter-spacing:-0.308px;color:#000;">By Topo</span><span class="a" style="left:801.5px;top:527px;font-size:11.5px;letter-spacing:-0.965px;color:#000;">By Comp</span>
<svg class="a" style="left:0;top:0" width="1366" height="768" viewBox="0 0 1366 768"><rect x="243.5" y="557" width="30" height="19" fill="#f0f0f0"/><path d="M243.5 576 v-19 h30" fill="none" stroke="#fff" stroke-width="1"/><path d="M243.5 576.5 h30.5" fill="none" stroke="#606060" stroke-width="1.4"/><polygon points="252.5,563.5 263.5,563.5 258,569.5" fill="#000"/><rect x="275" y="557.5" width="159.5" height="18" fill="#e8e464" stroke="#40e0d0" stroke-width="2"/><rect x="436" y="557" width="30" height="19" fill="#f0f0f0"/><path d="M436 576 v-19 h30" fill="none" stroke="#fff" stroke-width="1"/><path d="M436 576.5 h30.5 v-20" fill="none" stroke="#606060" stroke-width="1.4"/><rect x="445.5" y="561" width="2" height="11" fill="#000"/><polygon points="448,566.5 455.5,561 455.5,572" fill="#000"/><rect x="253" y="641" width="13" height="13" fill="#fff"/><path d="M253 654 v-13 h13" fill="none" stroke="#707070" stroke-width="1.4"/><path d="M253.5 654.5 h12.5 v-12.5" fill="none" stroke="#fff" stroke-width="1"/><rect x="253" y="661" width="13" height="13" fill="#fff"/><path d="M253 674 v-13 h13" fill="none" stroke="#707070" stroke-width="1.4"/><path d="M253.5 674.5 h12.5 v-12.5" fill="none" stroke="#fff" stroke-width="1"/><line x1="243" y1="700.5" x2="1356.5" y2="700.5" stroke="#808080" stroke-width="1"/><line x1="1356.5" y1="700.5" x2="1356.5" y2="560" stroke="#f8f8f8" stroke-width="1"/><rect x="1252.5" y="677.5" width="88" height="19" fill="#c86060"/><rect x="1254.5" y="679.5" width="84" height="15" fill="none" stroke="#4a1818" stroke-width="1.6"/><path d="M1252.5 696.5 v-19 h88" fill="none" stroke="#e08080" stroke-width="1"/><path d="M828 727.5 v-20.5 h123" fill="none" stroke="#383838" stroke-width="1.4"/><path d="M952 727.5 v-20.5 h126" fill="none" stroke="#383838" stroke-width="1.4"/><path d="M1079 727.5 v-20.5 h143" fill="none" stroke="#383838" stroke-width="1.4"/><path d="M1223 727.5 v-20.5 h143" fill="none" stroke="#383838" stroke-width="1.4"/></svg><span class="a" style="left:342.5px;top:558.5px;font-size:13px;letter-spacing:-0.268px;color:#000;">surfs</span><div class="gb" style="left:1132px;top:556.5px;width:209px;height:20px"></div><span class="a" style="left:1202.5px;top:558.5px;font-size:13px;letter-spacing:0.116px;color:#000;">delete entity</span><div class="gb" style="left:802px;top:597px;width:224px;height:20px"></div><span class="a" style="left:872.2px;top:599px;font-size:13px;letter-spacing:0.274px;color:#2a6a2a;">preview empty</span><div class="gb" style="left:802px;top:617px;width:224px;height:20px"></div><span class="a" style="left:868px;top:619px;font-size:13px;letter-spacing:0.249px;color:#2a6a2a;">preview unused</span><div class="gb" style="left:1132px;top:617px;width:209px;height:20px"></div><span class="a" style="left:1221px;top:619px;font-size:13px;letter-spacing:0.442px;color:#000;">reject</span><div class="gb" style="left:1132px;top:637px;width:209px;height:20px"></div><span class="a" style="left:1198.3px;top:639px;font-size:13px;letter-spacing:0.369px;color:#000;">delete model</span><span class="a" style="left:275.5px;top:638.5px;font-size:13px;letter-spacing:0.347px;color:#000;">delete associated solids</span><span class="a" style="left:275.5px;top:658.5px;font-size:13px;letter-spacing:0.342px;color:#000;">delete associated elems</span><span class="a" style="left:1281px;top:679px;font-size:13px;letter-spacing:-0.392px;color:#000;">return</span><span class="a" style="left:1104px;top:644px;font-size:20px;letter-spacing:0.9px;color:#c2c2c2;font-family:'Liberation Sans','Noto Sans CJK SC',sans-serif">激活 Windows</span><span class="a" style="left:1104px;top:672px;font-size:15px;color:#c4c4c4;font-family:'Liberation Sans','Noto Sans CJK SC',sans-serif">转到“设置”以激活 Windows。</span><span class="a" style="left:955.5px;top:709.5px;font-size:13px;letter-spacing:0.273px;color:#000;">Model</span>
<div id="status" class="a"></div><span class="a" style="left:13.5px;top:709.5px;font-size:13px;letter-spacing:0.191px;color:#000;">Delete Entities</span>
<div id="task" class="a"></div>
<svg class="a" style="left:0;top:0" width="1366" height="768" viewBox="0 0 1366 768"><polygon points="16,742.3 23,741.3 23,747.5 16,747.5" fill="#fff"/><polygon points="24,741.1 32,740 32,747.5 24,747.5" fill="#fff"/><polygon points="16,748.5 23,748.5 23,754.7 16,753.7" fill="#fff"/><polygon points="24,748.5 32,748.5 32,756 24,754.9" fill="#fff"/><rect x="48" y="731" width="124" height="34" fill="#e6e6e6"/><rect x="172" y="731" width="56" height="34" fill="#2a8cf4"/><circle cx="60.5" cy="748.5" r="6.2" fill="none" stroke="#1e9ae8" stroke-width="3"/><rect x="55" y="747.3" width="12" height="2.4" fill="#1e9ae8"/><rect x="62" y="750" width="7" height="3.4" fill="#e6e6e6"/><path d="M52.5 755 c-2 -5 4 -13 13 -15.5 c3 -0.8 4.5 0.5 3.5 3" fill="none" stroke="#1e9ae8" stroke-width="1.4"/><rect x="233" y="728" width="160" height="40" fill="#343434"/><rect x="233" y="765" width="160" height="3" fill="#76b9ed"/><path d="M247 743.5 q4 0.5 8 -1.5 q4 -2 8 -2.5 v12 q-4 0.5 -8 2.5 q-4 2 -8 1.5 z" fill="#7a7ab0" stroke="#4a4a80" stroke-width="0.6"/><path d="M247 747.5 q4 0.5 8 -1.5 q4 -2 8 -2.5 M247 751.5 q4 0.5 8 -1.5 q4 -2 8 -2.5 M252.3 743.5 v12 M257.7 741 v12" fill="none" stroke="#3a3a6c" stroke-width="0.8"/><path d="M412 740.5 l4.5 -4.5 l4.5 4.5 M412 756.5 l4.5 4.5 l4.5 -4.5" fill="none" stroke="#e0e0e0" stroke-width="1.3"/><rect x="435.5" y="744" width="14.5" height="9.5" fill="none" rx="1.2" stroke="#e8e8e8" stroke-width="1.1"/><path d="M438 747 h10 M438 749.3 h10 M440 751.5 h6" fill="none" stroke="#e8e8e8" stroke-width="1" stroke-dasharray="1.2 1"/><path d="M443 744 c0 -2 3 -1 3 -3" fill="none" stroke="#e8e8e8" stroke-width="1"/><rect x="847" y="741.5" width="9.5" height="14" fill="#58b020" rx="1.5"/><rect x="849" y="739.5" width="5.5" height="3" fill="#e8e8e8"/><path d="M851.7 745 v8 M851.7 750 l-2.2 -2 v-1.5 M851.7 751 l2.2 -2 v-1.5" fill="none" stroke="#fff" stroke-width="0.9"/><path d="M873 744 h7 v9 h-7 z M880 747 h4 l4 -2 v7 l-4 -2 h-4" fill="#a0a0a0" stroke="#c8c8c8" stroke-width="0.6"/><path d="M874 742 l2 3 M878 741.5 v3 M874.5 754 l-1.5 2 M879 754 l1 2" fill="none" stroke="#b0b0b0" stroke-width="0.9"/><rect x="896" y="740" width="16" height="16" fill="#fff" rx="3"/><path d="M899 747 h10 v6 h-10 z" fill="#f8a020"/><path d="M898.5 745 h11 v2.5 h-11 z" fill="#f8c040"/><text x="904" y="753" font-size="6.5" fill="#e04010" text-anchor="middle" font-weight="bold" font-family="Liberation Sans,sans-serif">k</text><circle cx="902" cy="743" r="1" fill="#40a0e0"/><circle cx="905.5" cy="742.5" r="1" fill="#60c040"/><path d="M921 740.5 h8 l3 3 v6 h-11 z" fill="#4088e0" stroke="#a0c8f8" stroke-width="0.6"/><path d="M926 747 l6 2.5 l3 5.5 l-5 1.5 l-4.5 -4 z" fill="#3070d0" stroke="#c0d8f8" stroke-width="0.8"/><text x="926" y="748" font-size="5.5" fill="#fff" text-anchor="middle" font-weight="bold" font-family="Liberation Sans,sans-serif">Q</text><circle cx="952" cy="748" r="7.2" fill="#fff"/><circle cx="952" cy="748" r="6" fill="none" stroke="#40b830" stroke-width="2.4"/><rect x="947" y="747" width="10" height="2" fill="#40b830"/><rect x="953" y="749.2" width="6" height="2.8" fill="#fff"/><path d="M945 755 q-2 -8 9 -14" fill="none" stroke="#40b830" stroke-width="1"/><path d="M969 741 l14 7 l-14 7.5 z" fill="#2890f0"/><path d="M969 744.5 l8 4 l-8 4 z" fill="#f89020"/><path d="M971 741.5 l12 6.5 l-5 2.5 z" fill="#60c838"/><path d="M972.5 745.8 l4.5 2.5 l-4.5 2.5 z" fill="#fff"/><rect x="992" y="740" width="16" height="16" fill="#fff" rx="2.5"/><path d="M994 743 q5 1 7 5 l5 -5 q-1 7 -6 9 l-4 3 l1 -4 q-3 -3 -3 -8 z" fill="#3868e0"/><rect x="1016" y="740" width="16" height="16" fill="#1878e0" rx="1.5"/><rect x="1024.5" y="741" width="6.5" height="5" fill="#f8c830"/><rect x="1017.5" y="744" width="3" height="3" fill="#fff"/><rect x="1017.5" y="749.5" width="3" height="3" fill="#fff"/><rect x="1022" y="744" width="8" height="3" fill="#fff"/><rect x="1022" y="749.5" width="8" height="3" fill="#fff"/><rect x="1040" y="740" width="15" height="15" fill="#1880d8" rx="3"/><path d="M1044 744 h6 v6 M1051 752 h-6 v-6" fill="none" stroke="#fff" stroke-width="1.4"/><rect x="1049.5" y="749.5" width="7" height="7" fill="#30b030" rx="1.5"/><path d="M1051 753 l1.6 1.6 l2.6 -3" fill="none" stroke="#fff" stroke-width="1.1"/><rect x="1064" y="740" width="16" height="16" fill="#fff" rx="3"/><circle cx="1068.7" cy="750" r="2.8" fill="none" stroke="#3890f0" stroke-width="1.3"/><circle cx="1075.3" cy="750" r="2.8" fill="none" stroke="#3890f0" stroke-width="1.3"/><circle cx="1072" cy="745.5" r="2.8" fill="none" stroke="#e04848" stroke-width="1.3"/><circle cx="1096" cy="745.5" r="4.2" fill="#d8b090"/><path d="M1092 744 q4 -5 8 0 q-4 -1.5 -8 0 z" fill="#909080"/><path d="M1088.5 756 q0 -6 7.5 -6.5 q7.5 0.5 7.5 6.5 z" fill="#589070"/><circle cx="1091.5" cy="752.5" r="2.8" fill="#e8e8e8"/><rect x="1116.5" y="743" width="7.5" height="12" fill="none" rx="1" stroke="#f0f0f0" stroke-width="1.1"/><rect x="1118" y="740" width="4.5" height="3" fill="none" stroke="#f0f0f0" stroke-width="1"/><path d="M1122.5 752.5 l1.8 1.8 l3 -3.5" fill="none" stroke="#f0f0f0" stroke-width="1"/><circle cx="1144" cy="748" r="7.8" fill="#c8d800"/><circle cx="1144" cy="748" r="6" fill="#88b000"/><path d="M1144 744 v8 M1140 748 h8" fill="none" stroke="#fff" stroke-width="2.2"/><path d="M1137 744.5 q3 -5 10 -4" fill="none" stroke="#f8f060" stroke-width="1.5"/><circle cx="1168" cy="748" r="2.4" fill="#e02030"/><circle cx="1163" cy="746" r="1.8" fill="#e02030"/><circle cx="1173" cy="745.5" r="1.8" fill="#e02030"/><circle cx="1164.5" cy="752" r="1.8" fill="#e02030"/><circle cx="1172" cy="752" r="1.8" fill="#e02030"/><circle cx="1168" cy="742.5" r="1.5" fill="#e02030"/><circle cx="1168" cy="754" r="1.4" fill="#e02030"/><rect x="1189" y="744" width="11.5" height="7.5" fill="none" stroke="#f0f0f0" stroke-width="1.1"/><rect x="1190.5" y="745.5" width="6" height="4.5" fill="#f0f0f0"/><rect x="1200.5" y="746" width="1.5" height="3.5" fill="#f0f0f0"/><path d="M1184 743.5 v2 M1187 743.5 v2 M1183 745.5 h5 v2 q0 2 -2.5 2 q-2.5 0 -2.5 -2 z M1185.5 749.5 v3 h3" fill="none" stroke="#f0f0f0" stroke-width="1"/><path d="M1211 755 A13 13 0 0 1 1224 742" fill="none" stroke="#808080" stroke-width="1.4"/><path d="M1214.5 755 A9.5 9.5 0 0 1 1224 745.5" fill="none" stroke="#f0f0f0" stroke-width="1.4"/><path d="M1218 755 A6 6 0 0 1 1224 749" fill="none" stroke="#f0f0f0" stroke-width="1.4"/><circle cx="1223" cy="754" r="1.6" fill="#f0f0f0"/><path d="M1232.5 745.5 h3 l4 -3.5 v12 l-4 -3.5 h-3 z" fill="none" stroke="#f0f0f0" stroke-width="1.1"/><path d="M1242 745 q2 3 0 6 M1244.5 743 q3.5 5 0 10 M1247 741.5 q4.5 6.5 0 13" fill="none" stroke="#f0f0f0" stroke-width="1.1"/><circle cx="1270.5" cy="748" r="11.5" fill="#f08030"/><rect x="1266" y="738.5" width="9" height="1.5" fill="#b05010"/><text x="1270.5" y="752.5" font-size="12" fill="#ffe8d0" text-anchor="middle" font-weight="normal" font-family="Liberation Sans,sans-serif">87</text></svg><span class="a" style="left:74px;top:739px;font-size:12px;letter-spacing:0.1px;color:#111;font-family:'Liberation Sans','Noto Sans CJK SC',sans-serif">凯特回应怀孕传...</span><span class="a" style="left:176px;top:738px;font-size:12px;color:#fff;font-family:'Liberation Sans','Noto Sans CJK SC',sans-serif">搜索一下</span><span class="a" style="left:271px;top:739.5px;font-size:13px;letter-spacing:0.080px;color:#fff;">Untitled* - Hyper...</span><span class="a" style="left:1309px;top:731.5px;font-size:13px;letter-spacing:-0.383px;color:#fff;">20:57</span><span class="a" style="left:1296px;top:750.5px;font-size:13px;letter-spacing:-0.104px;color:#fff;">2020/1/18</span>
<svg class="a" style="left:0;top:0" width="1366" height="768" viewBox="0 0 1366 768"><path d="M3.3 9 q3.5 0 7 -2.5 q3.5 -2.5 7 -3.3 v11 q-3.5 0.8 -7 3.3 q-3.5 2.5 -7 2.5 z" fill="#9c9cc8" stroke="#5c5c88" stroke-width="0.7"/><path d="M3.3 12.7 q3.5 0 7 -2.5 q3.5 -2.5 7 -3.3 M3.3 16.3 q3.5 0 7 -2.5 q3.5 -2.5 7 -3.3 M6.8 8.5 v11 M10.3 6.5 v11 M13.8 4.3 v11" fill="none" stroke="#5c5c88" stroke-width="0.9"/><line x1="1245" y1="10.5" x2="1255" y2="10.5" stroke="#000" stroke-width="1"/><rect x="1290.5" y="7.5" width="7.5" height="7.5" fill="#fff" stroke="#000" stroke-width="1"/><path d="M1292.5 7.5 v-2 h7.5 v7.5 h-2" fill="none" stroke="#000" stroke-width="1"/><path d="M1336 5 l10 10 M1346 5 l-10 10" fill="none" stroke="#000" stroke-width="1.1"/></svg><span style="position:absolute;top:18.5px;font-size:33px;line-height:36px;color:#e01414;-webkit-text-stroke:0.35px #e01414;white-space:nowrap;font-family:'Liberation Serif','Noto Serif CJK SC',serif;left:1033px;transform-origin:0 0;transform:scaleX(0.72);letter-spacing:0.5px">QQ</span><span style="position:absolute;top:18.5px;font-size:33px;line-height:36px;color:#e01414;-webkit-text-stroke:0.35px #e01414;white-space:nowrap;font-family:'Liberation Serif','Noto Serif CJK SC',serif;left:1068.5px;letter-spacing:0.5px">1787819157</span><span style="position:absolute;top:18.5px;font-size:33px;line-height:36px;color:#e01414;-webkit-text-stroke:0.35px #e01414;white-space:nowrap;font-family:'Liberation Serif','Noto Serif CJK SC',serif;left:1237.5px;letter-spacing:1.3px;top:20px;font-size:32px">栾制作</span>
</body></html>
